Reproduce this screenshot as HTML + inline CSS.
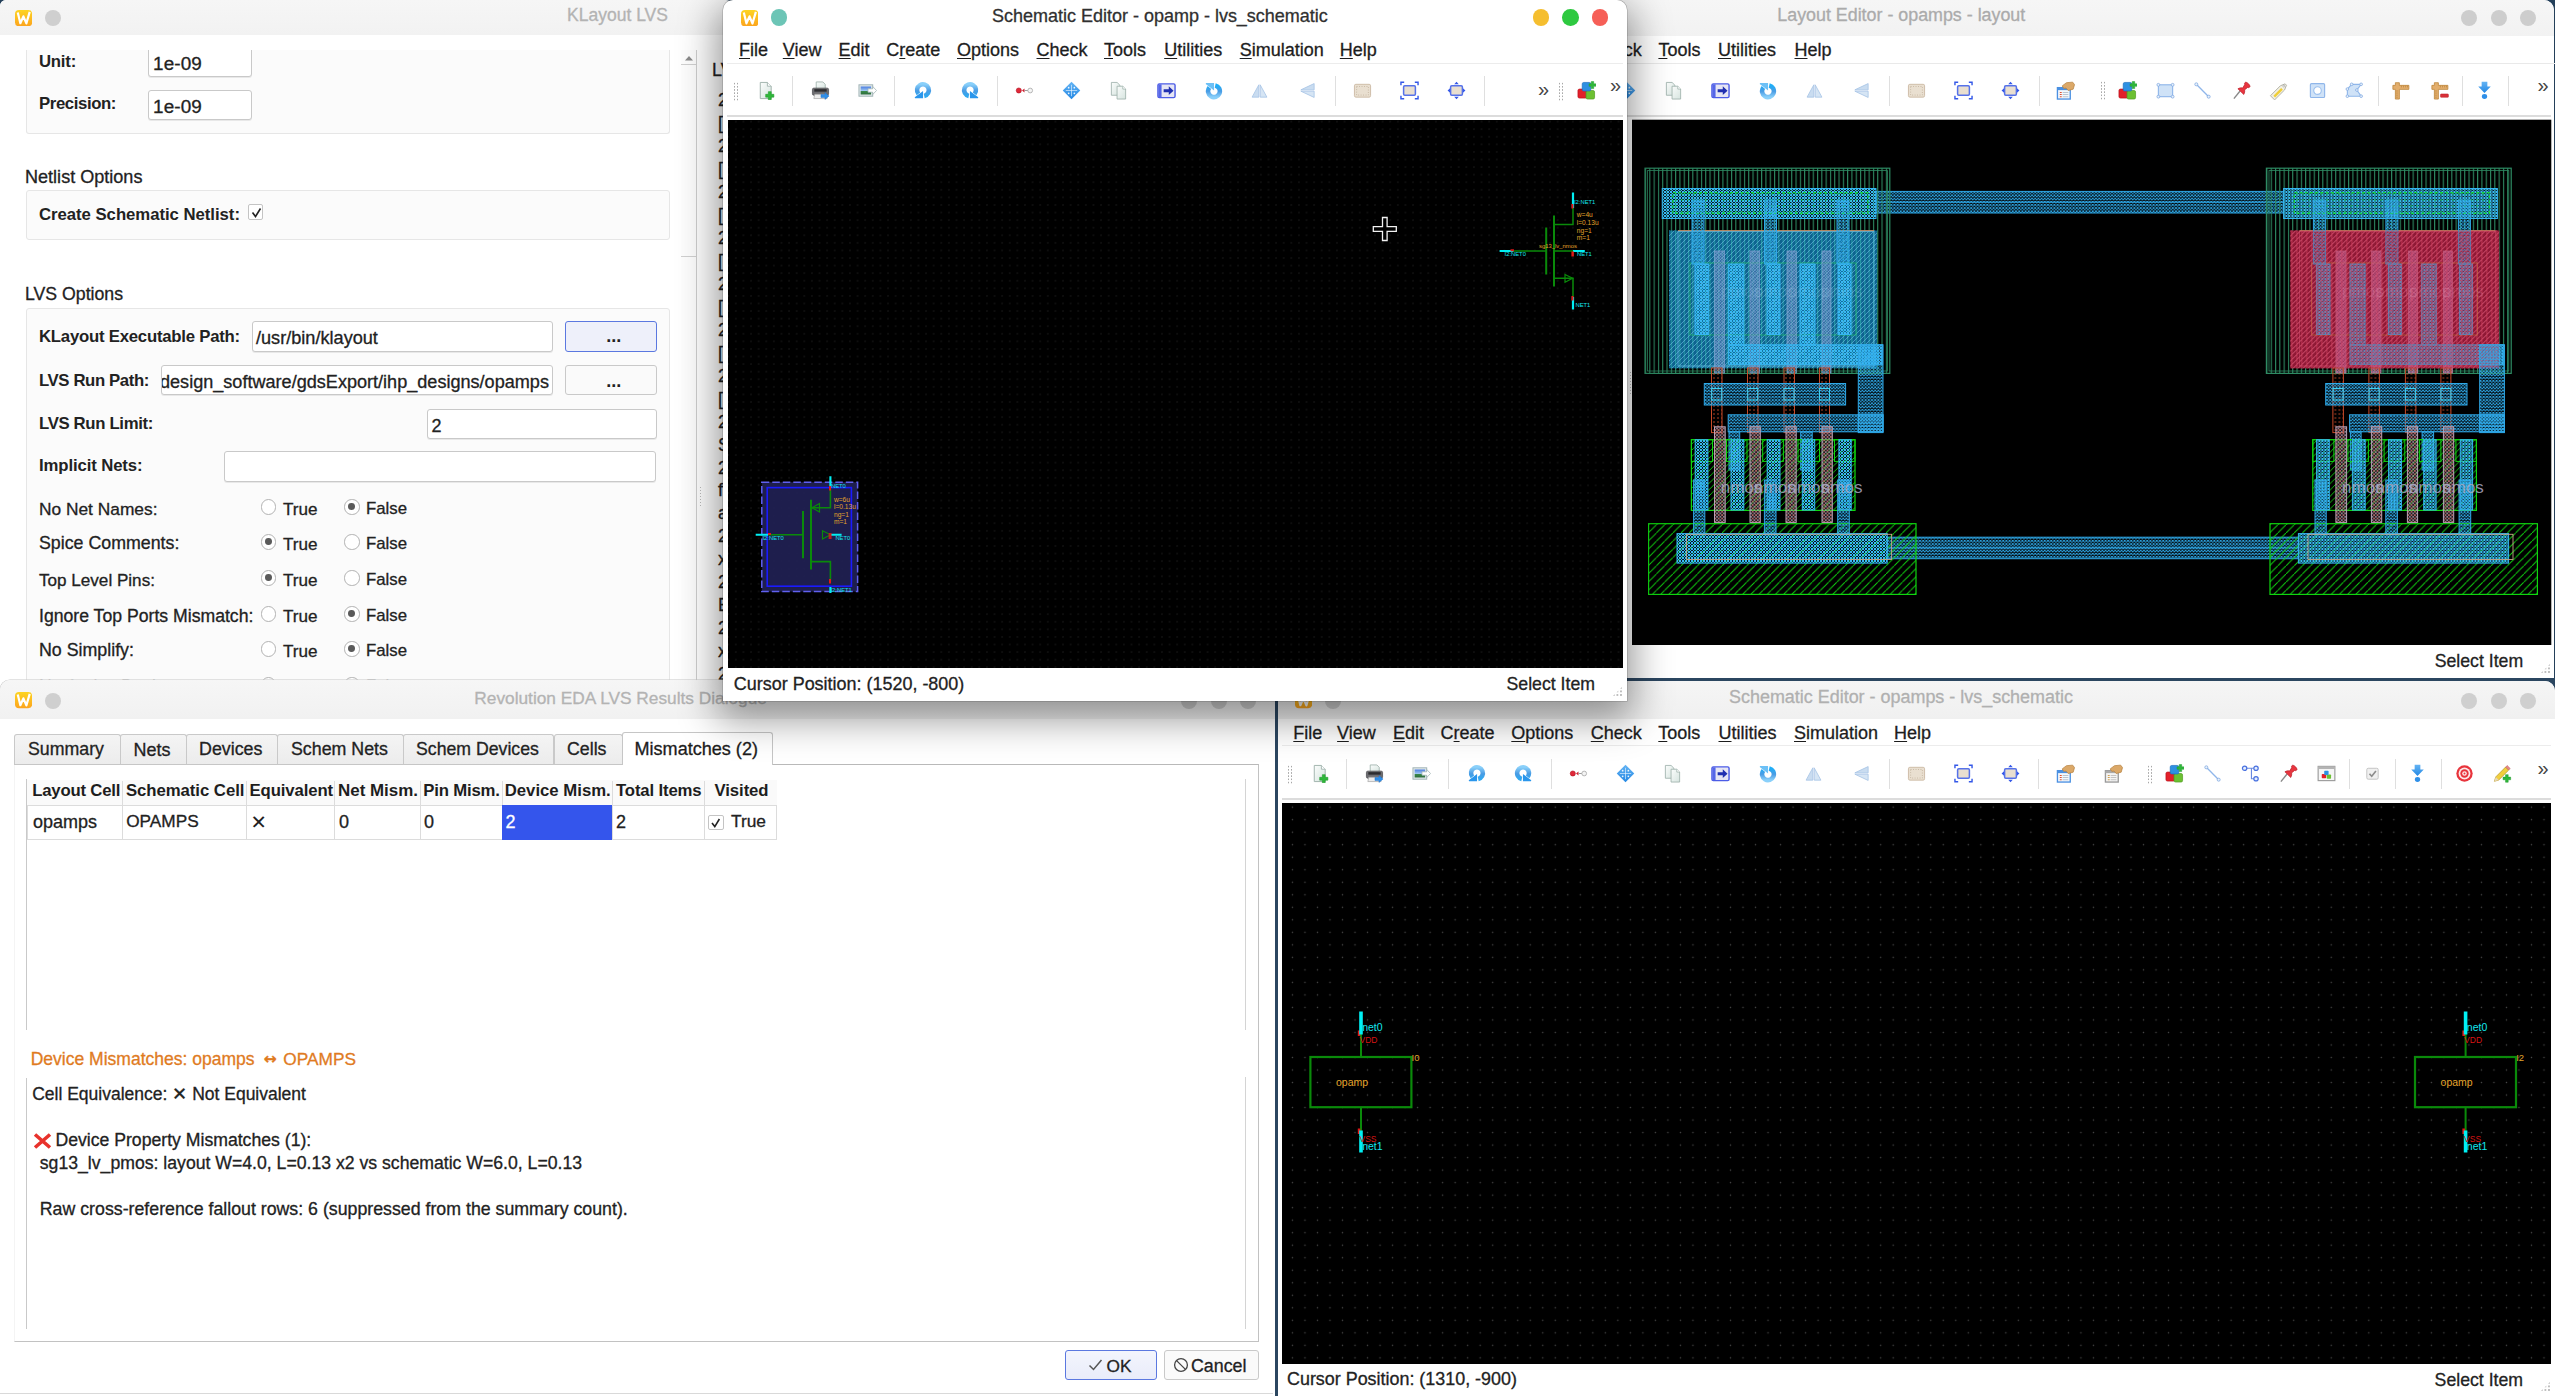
<!DOCTYPE html>
<html><head><meta charset="utf-8"><title>LVS</title><style>
html,body{margin:0;padding:0;}
body{width:2555px;height:1396px;overflow:hidden;position:relative;background:#24405a;font-family:"Liberation Sans",sans-serif;}
.b{position:absolute;box-sizing:border-box;}
.t{position:absolute;white-space:pre;line-height:1;}
.inp{background:#fff;border:1px solid #c9c9c9;border-radius:3px;box-shadow:0 1px 0 #e8e8e8;}
.btn{background:#fafafa;border:1px solid #c9c9c9;border-radius:3px;}
.grp{background:#fbfbfb;border:1px solid #e6e6e6;border-radius:3px;}
.chk{background:#fff;border:1px solid #c4c4c4;border-radius:2px;}
.rad{background:#fff;border:1.4px solid #b2b2b2;border-radius:50%;}
.r{-webkit-text-stroke:0.3px;}
.rad i{position:absolute;left:2.9px;top:2.9px;width:6.8px;height:6.8px;border-radius:50%;background:#5a5a5a;}
u{text-decoration-thickness:1px;text-underline-offset:2px;}
</style></head><body>
<!-- icons -->
<svg width="0" height="0" style="position:absolute"><defs>
<linearGradient id="gApp" x1="0" y1="0" x2="0" y2="1"><stop offset="0" stop-color="#fdd422"/><stop offset="1" stop-color="#fca41e"/></linearGradient>
<linearGradient id="gDoc" x1="0" y1="0" x2="1" y2="1"><stop offset="0" stop-color="#fbfdfc"/><stop offset="1" stop-color="#d6e4df"/></linearGradient>
<linearGradient id="gBlue" x1="0" y1="0" x2="0" y2="1"><stop offset="0" stop-color="#64b4f4"/><stop offset="1" stop-color="#2488e4"/></linearGradient>
<linearGradient id="gRing" x1="0" y1="0" x2="0" y2="1"><stop offset="0" stop-color="#8ad0fa"/><stop offset="0.55" stop-color="#4a9ce4"/><stop offset="1" stop-color="#30a8f0"/></linearGradient>
<linearGradient id="gRing2" x1="0" y1="0" x2="0" y2="1"><stop offset="0" stop-color="#8ad0fa"/><stop offset="0.5" stop-color="#4a9ce4"/><stop offset="1" stop-color="#1eaef8"/></linearGradient>
<linearGradient id="gLand" x1="0" y1="0" x2="0" y2="1"><stop offset="0" stop-color="#4a7ce0"/><stop offset="0.5" stop-color="#9cc4f0"/><stop offset="0.55" stop-color="#3c8c4c"/><stop offset="1" stop-color="#2c6c3c"/></linearGradient>
<g id="appicon"><rect x="0" y="0" width="18" height="17" rx="4.2" fill="url(#gApp)"/><path d="M2.9 2.6 L5.6 13.8 L8.8 6.6 L11.9 14 L15.4 1.9" fill="none" stroke="#fff" stroke-width="2.3" stroke-linejoin="round" stroke-linecap="butt"/></g>
<g id="i-new"><path d="M4.5 1.5h7.5l4 4v13h-11.5z" fill="url(#gDoc)" stroke="#9fb2ac" stroke-width="1"/><path d="M12 1.5v4h4" fill="#fff" stroke="#9fb2ac" stroke-width="0.9"/><path d="M13 11.2h3v2.8h2.8v3h-2.8v2.8h-3v-2.8h-2.8v-3h2.8z" fill="#2fb73a" stroke="#1f9a2c" stroke-width="0.6"/></g>
<g id="i-print"><path d="M5.5 1h7l2.5 2.5v5h-9.5z" fill="url(#gDoc)" stroke="#9fb2ac" stroke-width="0.9"/><rect x="1.5" y="7.5" width="17" height="7.5" rx="1.5" fill="#6c6c70" stroke="#4e4e52" stroke-width="0.8"/><rect x="3.5" y="8.6" width="13" height="2.6" fill="#2b2b2e"/><path d="M4 14h12l1 4.5h-14z" fill="#ececec" stroke="#aaa" stroke-width="0.8"/><path d="M10.5 14.3h4.2v-2.1l4.3 3.6-4.3 3.6v-2.1h-4.2z" fill="#2f8fe8" stroke="#1f6fc8" stroke-width="0.5"/></g>
<g id="i-export"><rect x="1" y="4" width="14.5" height="12" fill="#dfe8ea" stroke="#9fb2b4" stroke-width="1"/><rect x="2.8" y="5.8" width="11" height="8.4" fill="url(#gLand)"/><path d="M10.5 8.2h5v-2.4l4 4.2-4 4.2v-2.4h-5z" fill="#fff" stroke="#9fb2b4" stroke-width="0.8"/></g>
<g id="i-undo"><path d="M11.8 15.7A6.2 6.2 0 1 0 5.7 13.6" fill="none" stroke="url(#gRing)" stroke-width="4.8"/><path d="M1.8 17.2L10.6 10.4V18.2H2.2z" fill="#2a96ec"/></g>
<g id="i-redo"><g transform="translate(20,0) scale(-1,1)"><path d="M11.8 15.7A6.2 6.2 0 1 0 5.7 13.6" fill="none" stroke="url(#gRing)" stroke-width="4.8"/><path d="M1.8 17.2L10.6 10.4V18.2H2.2z" fill="#2a96ec"/></g></g>
<g id="i-stretch"><circle cx="4" cy="10" r="2.7" fill="#e02838" stroke="#b01020" stroke-width="0.6"/><path d="M10 7.8v4.4l-2.6-2.2z" fill="#d02030"/><path d="M10 10h4" stroke="#999" stroke-width="1"/><circle cx="16" cy="10" r="2.5" fill="#f4f4f4" stroke="#aaa" stroke-width="0.9"/></g>
<g id="i-move"><path d="M10 0.8l9.2 9.2-9.2 9.2-9.2-9.2z" fill="url(#gBlue)"/><path d="M10 4v12M4 10h12" stroke="#e8f4ff" stroke-width="0.8" stroke-opacity="0.85"/><g fill="#fff" fill-opacity="0.9"><circle cx="7" cy="7" r="0.9"/><circle cx="13" cy="7" r="0.9"/><circle cx="7" cy="13" r="0.9"/><circle cx="13" cy="13" r="0.9"/></g></g>
<g id="i-copy"><path d="M2.5 1.5h6l3 3v10.5h-9z" fill="url(#gDoc)" stroke="#9fb2ac" stroke-width="0.9"/><path d="M8.5 5.5h6l3 3v10.5h-9z" fill="url(#gDoc)" stroke="#9fb2ac" stroke-width="0.9"/><path d="M14.5 5.5v3h3" fill="#fff" stroke="#9fb2ac" stroke-width="0.8"/></g>
<g id="i-goto"><rect x="1" y="3" width="18" height="14.5" rx="1.5" fill="#e6e6f4" stroke="#4c5ce6" stroke-width="1.5"/><rect x="1.5" y="3.5" width="3.3" height="13.5" fill="#5566e8"/><path d="M7 8.6h5.4v-3l5 4.6-5 4.6v-3h-5.4z" fill="#2030b0"/></g>
<g id="i-rotate"><g transform="translate(0,20.4) scale(1,-1)"><path d="M11.8 15.7A6.2 6.2 0 1 0 5.7 13.6" fill="none" stroke="url(#gRing2)" stroke-width="4.8"/><path d="M1.8 17.2L10.6 10.4V18.2H2.2z" fill="#6cc0f6"/></g></g>
<g id="i-fliph"><path d="M9.3 4v13h-7.1z" fill="#c9dcf0" stroke="#a9c6e6" stroke-width="0.9"/><path d="M10.7 4v13h7.1z" fill="#d6e5f4" stroke="#a9c6e6" stroke-width="0.9"/></g>
<g id="i-flipv"><path d="M17 9.3h-14l14-6.6z" fill="#c9dcf0" stroke="#a9c6e6" stroke-width="0.9"/><path d="M17 10.7h-14l14 6.6z" fill="#d6e5f4" stroke="#a9c6e6" stroke-width="0.9"/></g>
<g id="i-fitrect"><rect x="1.5" y="3.5" width="17" height="13.5" rx="1.5" fill="#e9dfd0" stroke="#cdbca6" stroke-width="1"/><rect x="3.8" y="5.8" width="12.4" height="9" fill="none" stroke="#bfae98" stroke-width="0.8" stroke-dasharray="1 1.6"/></g>
<g id="i-zoomfit"><rect x="3.8" y="5" width="12.4" height="10" rx="1.2" fill="#e9dfd0" stroke="#5672ea" stroke-width="1.6"/><path d="M1 4.6v-3.2h3.4M19 4.6v-3.2h-3.4M1 15.4v3.2h3.4M19 15.4v3.2h-3.4" fill="none" stroke="#3458e8" stroke-width="1.5"/></g>
<g id="i-zoomsel"><rect x="3.8" y="5" width="12.4" height="10" rx="1.2" fill="#e9dfd0" stroke="#5672ea" stroke-width="1.6"/><path d="M10 0.8l2.4 2.6h-4.8zM10 19.2l2.4-2.6h-4.8zM0.6 10l2.6-2.4v4.8zM19.4 10l-2.6-2.4v4.8z" fill="#3458e8"/></g>
<g id="i-cubes"><rect x="1" y="8.5" width="9.5" height="9.5" rx="1.6" fill="#e3202a" stroke="#b80d18" stroke-width="0.7"/><rect x="9.5" y="10" width="9" height="9" rx="1.6" fill="#6cc032" stroke="#4d9a1c" stroke-width="0.7"/><rect x="5.5" y="1.5" width="9" height="9" rx="1.6" fill="#2d90e2" stroke="#1a6cc0" stroke-width="0.7"/><path d="M15 0.6h2.6v2.4h2.3v2.6h-2.3v2.4h-2.6v-2.4h-2.3v-2.6h2.3z" fill="#2fb73a" stroke="#1f9a2c" stroke-width="0.5"/></g>
<g id="i-props"><rect x="1.5" y="7" width="13.5" height="12" fill="#f4f8fc" stroke="#4a90e2" stroke-width="1.4"/><rect x="1.5" y="7" width="13.5" height="2.6" fill="#4a90e2"/><path d="M4 12h2M4 14.3h2M4 16.6h2" stroke="#e05030" stroke-width="1.1"/><path d="M7 12h6M7 14.3h6M7 16.6h6" stroke="#b8c4d0" stroke-width="1.1"/><path d="M6.5 5.2l4.5-3.4 6.5-.6 2 2.6-1.4 4.8-5.2 1.4-2.4-2.6-2.2.4z" fill="#dba868" stroke="#b98442" stroke-width="0.8"/></g>
<g id="i-props2"><rect x="1.5" y="7" width="13.5" height="12" fill="#f4f4f4" stroke="#9a9a9a" stroke-width="1.4"/><rect x="1.5" y="7" width="13.5" height="2.6" fill="#aaa"/><path d="M4 12h2M4 14.3h2M4 16.6h2" stroke="#d0a050" stroke-width="1.1"/><path d="M7 12h6M7 14.3h6M7 16.6h6" stroke="#c4c4c4" stroke-width="1.1"/><path d="M6.5 5.2l4.5-3.4 6.5-.6 2 2.6-1.4 4.8-5.2 1.4-2.4-2.6-2.2.4z" fill="#dba868" stroke="#b98442" stroke-width="0.8"/></g>
<g id="i-rect"><rect x="2.5" y="4" width="15" height="12.5" fill="#cfe2f7" stroke="#8fb6ea" stroke-width="1.2"/><g fill="#e8f1fb" stroke="#7fa8e0" stroke-width="0.8"><circle cx="2.5" cy="4" r="1.5"/><circle cx="17.5" cy="4" r="1.5"/><circle cx="2.5" cy="16.5" r="1.5"/><circle cx="17.5" cy="16.5" r="1.5"/></g></g>
<g id="i-line"><path d="M3.5 3.5l13 13" stroke="#8fb6ea" stroke-width="1.4"/><circle cx="3.5" cy="3.5" r="1.6" fill="#e8f1fb" stroke="#7fa8e0" stroke-width="0.8"/><circle cx="16.5" cy="16.5" r="1.6" fill="#e8f1fb" stroke="#7fa8e0" stroke-width="0.8"/></g>
<g id="i-pin"><path d="M2 18.5l6.5-8" stroke="#8a8a8a" stroke-width="1.5"/><path d="M6.2 8.2c2-1.2 4-1.2 5-.8l2.2-3.6c-.6-1 0-2.4 1.2-2.6 1.8.4 4 2.6 4.4 4.4-.2 1.2-1.6 1.8-2.6 1.2l-3.2 2.6c.4 1.2.2 3-.8 4.8z" fill="#e8353f" stroke="#b81822" stroke-width="0.7"/></g>
<g id="i-label"><path d="M1.5 15.5l10.5-10.5 5-2 1.4 1.4-2 5-10.5 10.5z" fill="#f2f0e4" stroke="#a8a89c" stroke-width="0.9"/><path d="M4.6 15.6l8.2-8.2 1.8 1.8-8.2 8.2z" fill="#f0cf3a"/><circle cx="15.6" cy="5.4" r="1" fill="#fff" stroke="#999" stroke-width="0.6"/></g>
<g id="i-via"><rect x="2.5" y="2.8" width="15" height="14.6" rx="1.2" fill="#cfe2f7" stroke="#8fb6ea" stroke-width="1.2"/><circle cx="10" cy="10.1" r="4" fill="#fff" stroke="#9cc0ee" stroke-width="1.2"/></g>
<g id="i-poly"><path d="M2.5 8.5l4.5-5h10l-4.5 6 4.5 6.5h-14.5z" fill="#cfe2f7" stroke="#8fb6ea" stroke-width="1.2"/><g fill="#e8f1fb" stroke="#7fa8e0" stroke-width="0.8"><circle cx="2.5" cy="8.5" r="1.4"/><circle cx="7" cy="3.5" r="1.4"/><circle cx="17" cy="3.5" r="1.4"/><circle cx="12.5" cy="9.5" r="1.4"/><circle cx="17" cy="16" r="1.4"/><circle cx="2.5" cy="16" r="1.4"/></g></g>
<g id="i-ruler"><path d="M4.6 1.8h4.2v2.8h10v4.2h-10v10.2h-4.2v-10.2h-2.6v-4.2h2.6z" fill="#e3ae6c" stroke="#c08840" stroke-width="0.9"/><path d="M11 5v1.8M13.2 5v1.8M15.4 5v1.8M17.4 5v1.8M5.4 10.5h1.8M5.4 12.7h1.8M5.4 14.9h1.8M5.4 17h1.8" stroke="#b07830" stroke-width="0.6"/></g>
<g id="i-rulerdel"><path d="M4.6 1.8h4.2v2.8h10v4.2h-10v10.2h-4.2v-10.2h-2.6v-4.2h2.6z" fill="#e3ae6c" stroke="#c08840" stroke-width="0.9"/><path d="M11 5v1.8M13.2 5v1.8M15.4 5v1.8M17.4 5v1.8M5.4 10.5h1.8M5.4 12.7h1.8M5.4 14.9h1.8M5.4 17h1.8" stroke="#b07830" stroke-width="0.6"/><rect x="11" y="13.6" width="8.4" height="3.6" rx="0.9" fill="#d83038" stroke="#b81820" stroke-width="0.5"/></g>
<g id="i-down"><path d="M7 0.8h6v5h3.6l-6.6 6.8-6.6-6.8h3.6z" fill="url(#gBlue)"/><ellipse cx="10" cy="16.3" rx="2.8" ry="2.6" fill="#2f8fe8"/></g>
<g id="i-nodes"><path d="M4.5 4.5h6.5v11h3M11 4.5h3" fill="none" stroke="#6a8ae0" stroke-width="1.2"/><g fill="#e6eefc" stroke="#4a72e0" stroke-width="1.3"><circle cx="3.8" cy="4.5" r="2.3"/><circle cx="15.8" cy="4.5" r="2.3"/><circle cx="15.8" cy="15.5" r="2.3"/></g></g>
<g id="i-wincubes"><rect x="1.2" y="2.5" width="17.6" height="15" fill="#f6f6f6" stroke="#9a9a9a" stroke-width="1.2"/><rect x="1.2" y="2.5" width="17.6" height="2.8" fill="#b4b4b4"/><rect x="5" y="10.5" width="4.6" height="4.6" rx="0.8" fill="#e3202a"/><rect x="10.2" y="11" width="4.6" height="4.6" rx="0.8" fill="#6cc032"/><rect x="7.6" y="7" width="4.6" height="4.6" rx="0.8" fill="#2d90e2"/></g>
<g id="i-check"><rect x="4" y="4.5" width="12" height="11.5" rx="1.5" fill="#f0f0f0" stroke="#c2c2c2" stroke-width="1"/><path d="M6.8 10.2l2.4 2.8 4.4-5.6" fill="none" stroke="#8c8c8c" stroke-width="1.7"/></g>
<g id="i-target"><circle cx="10" cy="10" r="8.6" fill="#e8343c"/><circle cx="10" cy="10" r="6.2" fill="#fdeaea"/><circle cx="10" cy="10" r="4.4" fill="#e8343c"/><circle cx="10" cy="10" r="2.4" fill="#fdeaea"/><circle cx="10" cy="10" r="1" fill="#e8343c"/></g>
<g id="i-pencilplus"><path d="M1.5 18.2l1.4-4.6 10.4-10.4 3.2 3.2-10.4 10.4z" fill="#f2cf3c" stroke="#b8982a" stroke-width="0.8"/><path d="M13.3 3.2l1.6-1.6 3.2 3.2-1.6 1.6z" fill="#e88a8a" stroke="#b85a5a" stroke-width="0.6"/><path d="M1.5 18.2l1.4-4.6 3.2 3.2z" fill="#e8d8b8"/><path d="M13.2 11.2h2.8v2.6h2.6v2.8h-2.6v2.6h-2.8v-2.6h-2.6v-2.8h2.6z" fill="#2fb73a" stroke="#1f9a2c" stroke-width="0.5"/></g>
</defs></svg>
<!-- win1 -->
<div class="b " style="left:0.0px;top:0.0px;width:735.0px;height:690.0px;background:#fff;border-radius:6px 10px 0 0;"></div>
<div class="b " style="left:0.0px;top:0.0px;width:735.0px;height:35.0px;background:linear-gradient(#f6f6f6,#f2f2f2);border-radius:6px 10px 0 0;"></div>
<svg class="b" style="left:15px;top:9.6px" width="17.2" height="16.3" viewBox="0 0 18 17"><use href="#appicon"/></svg>
<div class="b " style="left:44.9px;top:9.7px;width:16.4px;height:16.4px;border-radius:50%;background:#cfcfcf;"></div>
<span class="t r " style="left:567.0px;top:7.1px;font-size:17.52px;color:#b3b3b3;">KLayout LVS</span>
<div class="b " style="left:26.0px;top:50.0px;width:644.0px;height:84.0px;background:#fbfbfb;border:1px solid #e6e6e6;border-top:none;border-radius:0 0 3px 3px;box-sizing:border-box;"></div>
<span class="t " style="left:39.0px;top:54.0px;font-size:16.74px;letter-spacing:-0.223px;font-weight:bold;color:#222;">Unit:</span>
<div class="b inp" style="left:148.0px;top:47.0px;width:103.5px;height:30.3px;"><span class="t r " style="left:4.0px;top:7.2px;font-size:18.90px;letter-spacing:0.132px;color:#222;">1e-09</span></div>
<div class="b " style="left:140.0px;top:35.5px;width:120.0px;height:14.5px;background:#fff;"></div>
<span class="t " style="left:39.0px;top:96.3px;font-size:16.74px;letter-spacing:-0.394px;font-weight:bold;color:#222;">Precision:</span>
<div class="b inp" style="left:148.0px;top:90.3px;width:103.5px;height:30.0px;"><span class="t r " style="left:4.0px;top:6.5px;font-size:18.90px;letter-spacing:0.132px;color:#222;">1e-09</span></div>
<span class="t r " style="left:25.0px;top:167.5px;font-size:18.07px;color:#222;">Netlist Options</span>
<div class="b grp" style="left:26.0px;top:190.0px;width:644.0px;height:50.0px;"></div>
<span class="t " style="left:39.0px;top:206.9px;font-size:16.74px;letter-spacing:-0.036px;font-weight:bold;color:#222;">Create Schematic Netlist:</span>
<div class="b chk" style="left:247.5px;top:204.0px;width:15.5px;height:15.5px;"><svg width="16" height="16" viewBox="0 0 16 16" style="position:absolute;left:0;top:0"><path d="M3.5 7.5 L6.5 11.5 L11.5 3.5" fill="none" stroke="#222" stroke-width="1.6"/></svg></div>
<span class="t r " style="left:25.0px;top:286.1px;font-size:17.69px;color:#222;">LVS Options</span>
<div class="b grp" style="left:26.0px;top:307.5px;width:644.0px;height:390.0px;"></div>
<span class="t " style="left:39.0px;top:329.3px;font-size:16.74px;letter-spacing:-0.230px;font-weight:bold;color:#222;">KLayout Executable Path:</span>
<div class="b inp" style="left:252.0px;top:321.0px;width:301.0px;height:30.5px;"><span class="t r " style="left:3.0px;top:6.7px;font-size:18.14px;color:#222;">/usr/bin/klayout</span></div>
<div class="b btn" style="left:565.3px;top:321.0px;width:92.0px;height:30.5px;border-color:#5b78e0;background:#eef0fa;"><span class="t " style="left:40.0px;top:5.3px;font-size:18.00px;font-weight:bold;color:#222;">...</span></div>
<span class="t " style="left:39.0px;top:372.8px;font-size:16.74px;letter-spacing:-0.385px;font-weight:bold;color:#222;">LVS Run Path:</span>
<div class="b inp" style="left:161.0px;top:365.3px;width:392.0px;height:30.0px;overflow:hidden;"><span class="t r " style="left:-2.0px;top:6.8px;font-size:18.08px;color:#222;">design_software/gdsExport/ihp_designs/opamps</span></div>
<div class="b btn" style="left:565.3px;top:365.3px;width:92.0px;height:30.0px;"><span class="t " style="left:40.0px;top:5.3px;font-size:18.00px;font-weight:bold;color:#222;">...</span></div>
<span class="t " style="left:39.0px;top:415.8px;font-size:16.74px;letter-spacing:-0.337px;font-weight:bold;color:#222;">LVS Run Limit:</span>
<div class="b inp" style="left:426.6px;top:409.0px;width:230.0px;height:30.0px;"><span class="t r " style="left:4.0px;top:6.9px;font-size:18.00px;color:#222;">2</span></div>
<span class="t " style="left:39.0px;top:458.3px;font-size:16.74px;letter-spacing:-0.115px;font-weight:bold;color:#222;">Implicit Nets:</span>
<div class="b inp" style="left:224.4px;top:451.0px;width:432.0px;height:30.5px;"></div>
<span class="t r " style="left:39.0px;top:500.8px;font-size:17.34px;color:#222;">No Net Names:</span>
<div class="b rad" style="left:261.1px;top:499.3px;width:15.4px;height:15.4px;"></div>
<span class="t r " style="left:283.0px;top:501.0px;font-size:17.09px;color:#222;">True</span>
<div class="b rad" style="left:344.3px;top:499.3px;width:15.4px;height:15.4px;"><i></i></div>
<span class="t r " style="left:366.0px;top:501.3px;font-size:16.77px;color:#222;">False</span>
<span class="t r " style="left:39.0px;top:535.4px;font-size:17.80px;color:#222;">Spice Comments:</span>
<div class="b rad" style="left:261.1px;top:534.3px;width:15.4px;height:15.4px;"><i></i></div>
<span class="t r " style="left:283.0px;top:536.0px;font-size:17.09px;color:#222;">True</span>
<div class="b rad" style="left:344.3px;top:534.3px;width:15.4px;height:15.4px;"></div>
<span class="t r " style="left:366.0px;top:536.3px;font-size:16.77px;color:#222;">False</span>
<span class="t r " style="left:39.0px;top:572.0px;font-size:17.10px;color:#222;">Top Level Pins:</span>
<div class="b rad" style="left:261.1px;top:570.3px;width:15.4px;height:15.4px;"><i></i></div>
<span class="t r " style="left:283.0px;top:572.0px;font-size:17.09px;color:#222;">True</span>
<div class="b rad" style="left:344.3px;top:570.3px;width:15.4px;height:15.4px;"></div>
<span class="t r " style="left:366.0px;top:572.3px;font-size:16.77px;color:#222;">False</span>
<span class="t r " style="left:39.0px;top:607.6px;font-size:17.65px;color:#222;">Ignore Top Ports Mismatch:</span>
<div class="b rad" style="left:261.1px;top:606.3px;width:15.4px;height:15.4px;"></div>
<span class="t r " style="left:283.0px;top:608.0px;font-size:17.09px;color:#222;">True</span>
<div class="b rad" style="left:344.3px;top:606.3px;width:15.4px;height:15.4px;"><i></i></div>
<span class="t r " style="left:366.0px;top:608.3px;font-size:16.77px;color:#222;">False</span>
<span class="t r " style="left:39.0px;top:642.4px;font-size:17.81px;color:#222;">No Simplify:</span>
<div class="b rad" style="left:261.1px;top:641.3px;width:15.4px;height:15.4px;"></div>
<span class="t r " style="left:283.0px;top:643.0px;font-size:17.09px;color:#222;">True</span>
<div class="b rad" style="left:344.3px;top:641.3px;width:15.4px;height:15.4px;"><i></i></div>
<span class="t r " style="left:366.0px;top:643.3px;font-size:16.77px;color:#222;">False</span>
<span class="t r " style="left:39.0px;top:678.6px;font-size:17.56px;color:#222;">No Series Resistors:</span>
<div class="b rad" style="left:261.1px;top:677.3px;width:15.4px;height:15.4px;"></div>
<span class="t r " style="left:283.0px;top:679.0px;font-size:17.09px;color:#222;">True</span>
<div class="b rad" style="left:344.3px;top:677.3px;width:15.4px;height:15.4px;"><i></i></div>
<span class="t r " style="left:366.0px;top:679.3px;font-size:16.77px;color:#222;">False</span>
<div class="b " style="left:681.0px;top:50.0px;width:15.8px;height:640.0px;background:#fdfdfd;border-right:1px solid #cfcfcf;box-sizing:border-box;"></div>
<svg class="b" style="left:684px;top:54px" width="10" height="8"><path d="M1 6.5 L5 2 L9 6.5Z" fill="#8a8a8a"/></svg>
<div class="b " style="left:681.0px;top:64.0px;width:15.0px;height:1.0px;background:#d0d0d0;"></div>
<div class="b " style="left:681.0px;top:256.0px;width:15.0px;height:1.0px;background:#d0d0d0;"></div>
<div class="b " style="left:699.5px;top:487.0px;width:1.0px;height:20.0px;background:repeating-linear-gradient(#bbb 0 1px,transparent 1px 3px);"></div>
<span class="t r " style="left:712.0px;top:61.0px;font-size:18.00px;color:#222;">LVS</span>
<span class="t r " style="left:718.0px;top:91.3px;font-size:18.00px;color:#222;">2</span>
<span class="t r " style="left:718.0px;top:114.2px;font-size:18.00px;color:#222;">[</span>
<span class="t r " style="left:718.0px;top:137.2px;font-size:18.00px;color:#222;">2</span>
<span class="t r " style="left:718.0px;top:160.1px;font-size:18.00px;color:#222;">[</span>
<span class="t r " style="left:718.0px;top:183.1px;font-size:18.00px;color:#222;">2</span>
<span class="t r " style="left:718.0px;top:206.0px;font-size:18.00px;color:#222;">[</span>
<span class="t r " style="left:718.0px;top:229.0px;font-size:18.00px;color:#222;">2</span>
<span class="t r " style="left:718.0px;top:251.9px;font-size:18.00px;color:#222;">[</span>
<span class="t r " style="left:718.0px;top:274.9px;font-size:18.00px;color:#222;">2</span>
<span class="t r " style="left:718.0px;top:297.8px;font-size:18.00px;color:#222;">[</span>
<span class="t r " style="left:718.0px;top:320.8px;font-size:18.00px;color:#222;">2</span>
<span class="t r " style="left:718.0px;top:343.7px;font-size:18.00px;color:#222;">[</span>
<span class="t r " style="left:718.0px;top:366.7px;font-size:18.00px;color:#222;">2</span>
<span class="t r " style="left:718.0px;top:389.6px;font-size:18.00px;color:#222;">[</span>
<span class="t r " style="left:718.0px;top:412.6px;font-size:18.00px;color:#222;">2</span>
<span class="t r " style="left:718.0px;top:435.5px;font-size:18.00px;color:#222;">S</span>
<span class="t r " style="left:718.0px;top:458.5px;font-size:18.00px;color:#222;">2</span>
<span class="t r " style="left:718.0px;top:481.4px;font-size:18.00px;color:#222;">f</span>
<span class="t r " style="left:718.0px;top:504.4px;font-size:18.00px;color:#222;">a</span>
<span class="t r " style="left:718.0px;top:527.3px;font-size:18.00px;color:#222;">2</span>
<span class="t r " style="left:718.0px;top:550.3px;font-size:18.00px;color:#222;">x</span>
<span class="t r " style="left:718.0px;top:573.2px;font-size:18.00px;color:#222;">2</span>
<span class="t r " style="left:718.0px;top:596.2px;font-size:18.00px;color:#222;">E</span>
<span class="t r " style="left:718.0px;top:619.1px;font-size:18.00px;color:#222;">2</span>
<span class="t r " style="left:718.0px;top:642.1px;font-size:18.00px;color:#222;">x</span>
<span class="t r " style="left:718.0px;top:665.0px;font-size:18.00px;color:#222;">2</span>
<!-- win3 -->
<div class="b " style="left:1540.0px;top:0.0px;width:1014.3px;height:679.0px;background:#fff;border-radius:10px 10px 0 0;"></div>
<div class="b " style="left:1540.0px;top:0.0px;width:1014.3px;height:35.5px;background:linear-gradient(#f6f6f6,#f2f2f2);border-radius:10px 10px 0 0;"></div>
<span class="t r " style="left:1777.3px;top:6.6px;font-size:17.85px;color:#ababab;">Layout Editor - opamps - layout</span>
<div class="b " style="left:2461.0px;top:9.5px;width:16.0px;height:16.0px;border-radius:50%;background:#cdcdcd;"></div>
<div class="b " style="left:2491.0px;top:9.5px;width:16.0px;height:16.0px;border-radius:50%;background:#cdcdcd;"></div>
<div class="b " style="left:2520.0px;top:9.5px;width:16.0px;height:16.0px;border-radius:50%;background:#cdcdcd;"></div>
<span class="t r " style="left:1590.8px;top:40.9px;font-size:18.00px;color:#1d1d1d;"><u>C</u>heck</span>
<span class="t r " style="left:1658.4px;top:40.9px;font-size:18.00px;color:#1d1d1d;"><u>T</u>ools</span>
<span class="t r " style="left:1718.0px;top:40.9px;font-size:18.00px;color:#1d1d1d;"><u>U</u>tilities</span>
<span class="t r " style="left:1794.5px;top:40.9px;font-size:18.00px;color:#1d1d1d;"><u>H</u>elp</span>
<div class="b " style="left:1540.0px;top:62.5px;width:1015.0px;height:1.5px;background:#e9e9e9;"></div>
<div class="b " style="left:1540.0px;top:115.2px;width:1011.0px;height:1.8px;background:#dcdcdc;"></div>
<svg class="b" style="left:1616.5px;top:80.9px" width="19" height="19" viewBox="0 0 20 20"><use href="#i-move"/></svg>
<svg class="b" style="left:1663.5px;top:80.9px" width="19" height="19" viewBox="0 0 20 20"><use href="#i-copy"/></svg>
<svg class="b" style="left:1710.5px;top:80.9px" width="19" height="19" viewBox="0 0 20 20"><use href="#i-goto"/></svg>
<svg class="b" style="left:1758.0px;top:80.9px" width="19" height="19" viewBox="0 0 20 20"><use href="#i-rotate"/></svg>
<svg class="b" style="left:1804.5px;top:80.9px" width="19" height="19" viewBox="0 0 20 20"><use href="#i-fliph"/></svg>
<svg class="b" style="left:1852.0px;top:80.9px" width="19" height="19" viewBox="0 0 20 20"><use href="#i-flipv"/></svg>
<div class="b" style="left:1889.2px;top:76.1px;width:1px;height:30px;background:#dfdfdf"></div>
<svg class="b" style="left:1906.9px;top:80.9px" width="19" height="19" viewBox="0 0 20 20"><use href="#i-fitrect"/></svg>
<svg class="b" style="left:1953.5px;top:80.9px" width="19" height="19" viewBox="0 0 20 20"><use href="#i-zoomfit"/></svg>
<svg class="b" style="left:2000.9px;top:80.9px" width="19" height="19" viewBox="0 0 20 20"><use href="#i-zoomsel"/></svg>
<div class="b" style="left:2038.5px;top:76.1px;width:1px;height:30px;background:#dfdfdf"></div>
<svg class="b" style="left:2056.2px;top:80.9px" width="19" height="19" viewBox="0 0 20 20"><use href="#i-props"/></svg>
<div class="b" style="left:2099.5px;top:81.4px;width:6px;height:19px;background:radial-gradient(circle,#a8a8a8 0.6px,transparent 0.9px) 0 0/3px 3.2px"></div>
<svg class="b" style="left:2118.0px;top:80.9px" width="19" height="19" viewBox="0 0 20 20"><use href="#i-cubes"/></svg>
<svg class="b" style="left:2155.5px;top:80.9px" width="19" height="19" viewBox="0 0 20 20"><use href="#i-rect"/></svg>
<svg class="b" style="left:2193.0px;top:80.9px" width="19" height="19" viewBox="0 0 20 20"><use href="#i-line"/></svg>
<svg class="b" style="left:2231.5px;top:80.9px" width="19" height="19" viewBox="0 0 20 20"><use href="#i-pin"/></svg>
<svg class="b" style="left:2269.1px;top:80.9px" width="19" height="19" viewBox="0 0 20 20"><use href="#i-label"/></svg>
<svg class="b" style="left:2307.5px;top:80.9px" width="19" height="19" viewBox="0 0 20 20"><use href="#i-via"/></svg>
<svg class="b" style="left:2345.2px;top:80.9px" width="19" height="19" viewBox="0 0 20 20"><use href="#i-poly"/></svg>
<div class="b" style="left:2378.0px;top:76.1px;width:1px;height:30px;background:#dfdfdf"></div>
<svg class="b" style="left:2391.0px;top:80.9px" width="19" height="19" viewBox="0 0 20 20"><use href="#i-ruler"/></svg>
<svg class="b" style="left:2429.5px;top:80.9px" width="19" height="19" viewBox="0 0 20 20"><use href="#i-rulerdel"/></svg>
<div class="b" style="left:2461.5px;top:76.1px;width:1px;height:30px;background:#dfdfdf"></div>
<svg class="b" style="left:2475.1px;top:80.9px" width="19" height="19" viewBox="0 0 20 20"><use href="#i-down"/></svg>
<div class="b" style="left:2507.9px;top:76.1px;width:1px;height:30px;background:#dfdfdf"></div>
<span class="t r " style="left:2537.5px;top:75.1px;font-size:20.00px;color:#444;-webkit-text-stroke:0;">»</span>
<svg class="b" style="left:0;top:0" width="2555" height="700" viewBox="0 0 2555 700">
<defs>
<pattern id="pNW" width="4.3" height="8" patternUnits="userSpaceOnUse" x="1645"><rect x="0" width="1.1" height="8" fill="#2e8b63"/></pattern>
<pattern id="pNW2" width="4.3" height="8" patternUnits="userSpaceOnUse" x="1645"><rect x="0" width="1.1" height="8" fill="#2aa4a8" fill-opacity="0.8"/></pattern>
<pattern id="pM1" width="3.2" height="3.2" patternUnits="userSpaceOnUse"><path d="M-1 -1 L4.2 4.2 M-1 4.2 L4.2 -1" stroke="#2fa9e8" stroke-width="0.85" fill="none"/></pattern>
<pattern id="pM1b" width="3" height="3" patternUnits="userSpaceOnUse"><rect width="3" height="3" fill="#27aeea" fill-opacity="0.14"/><path d="M-1 -1 L4 4 M-1 4 L4 -1" stroke="#38b8f4" stroke-width="1" fill="none"/></pattern>
<pattern id="pHb" width="5" height="5" patternUnits="userSpaceOnUse"><path d="M-1 6 L6 -1" stroke="#6fc0e6" stroke-width="0.8" stroke-opacity="0.75"/></pattern>
<pattern id="pHr" width="5" height="5" patternUnits="userSpaceOnUse"><path d="M-1 6 L6 -1" stroke="#e0607e" stroke-width="0.8" stroke-opacity="0.7"/><rect x="0" width="0.9" height="5" fill="#d24060" fill-opacity="0.5"/></pattern>
<pattern id="pG" width="6.3" height="6.3" patternUnits="userSpaceOnUse"><path d="M-1 7.3 L7.3 -1" stroke="#0fd60f" stroke-width="0.9"/></pattern>
<pattern id="pTap" width="8.2" height="8.2" patternUnits="userSpaceOnUse"><path d="M-1 9.2 L9.2 -1" stroke="#0fd60f" stroke-width="0.95"/></pattern>
<pattern id="pGdot" width="6" height="6" patternUnits="userSpaceOnUse"><circle cx="2" cy="2" r="0.8" fill="#12d83a"/></pattern>
<pattern id="pPolyB" width="3" height="3" patternUnits="userSpaceOnUse"><rect width="3" height="3" fill="#6f8cc4" fill-opacity="0.4"/><path d="M-1 -1 L4 4 M-1 4 L4 -1" stroke="#86a0d4" stroke-width="0.5" stroke-opacity="0.8"/></pattern>
<pattern id="pPolyR" width="3" height="3" patternUnits="userSpaceOnUse"><rect width="3" height="3" fill="#b870b0" fill-opacity="0.45"/><path d="M-1 -1 L4 4 M-1 4 L4 -1" stroke="#d080b0" stroke-width="0.6"/></pattern>
<pattern id="pPolyO" width="4" height="4" patternUnits="userSpaceOnUse"><circle cx="2" cy="2" r="0.8" fill="#c84a28"/></pattern>
<pattern id="pPolyN" width="3.4" height="3.4" patternUnits="userSpaceOnUse"><rect width="3.4" height="3.4" fill="#9a8494" fill-opacity="0.22"/><path d="M-1 -1 L4.4 4.4 M-1 4.4 L4.4 -1" stroke="#b9a3b8" stroke-width="0.6"/><circle cx="1.7" cy="1.7" r="0.7" fill="#d04030"/></pattern>
</defs>
<rect x="1632.0" y="119.7" width="919.3" height="525.3" fill="#000"/>
<rect x="1876.0" y="191.4" width="407.6" height="21.6" fill="url(#pM1)" stroke="#2fa9e8" stroke-width="1"/>
<rect x="1876.0" y="201.6" width="407.6" height="1.0" fill="#2fa9e8"/>
<rect x="1887.2" y="537.2" width="411.2" height="21.5" fill="url(#pM1)" stroke="#2fa9e8" stroke-width="1"/>
<rect x="1887.2" y="547.4" width="411.2" height="1.0" fill="#2fa9e8"/>
<g transform="translate(0.0,0)">
<rect x="1645.0" y="168.2" width="244.8" height="205.2" fill="url(#pNW)" stroke="#2e8b63" stroke-width="1.2"/>
<rect x="1647.6" y="170.6" width="239.8" height="200.4" fill="none" stroke="#2e8b63" stroke-width="0.8"/>
<rect x="1669.0" y="230.5" width="208.0" height="137.8" fill="#0f6898" fill-opacity="0.95"/>
<rect x="1669.0" y="230.5" width="208.0" height="137.8" fill="url(#pNW2)"/>
<rect x="1669.0" y="230.5" width="208.0" height="137.8" fill="url(#pHb)"/>
<rect x="1678.0" y="231.5" width="196.0" height="134.5" fill="none" stroke="#5fb6dc" stroke-width="0.8"/>
<line x1="1678" y1="230.6" x2="1874" y2="230.6" stroke="#c08a60" stroke-width="1"/>
<rect x="1690.0" y="263.0" width="166.0" height="72.0" fill="none" stroke="#20c060" stroke-width="0.8" stroke-opacity="0.8"/>
<rect x="1714.6" y="251.0" width="10.0" height="122.0" fill="url(#pPolyB)" stroke="#7f9fd0" stroke-width="0.7"/>
<rect x="1750.0" y="251.0" width="9.6" height="122.0" fill="url(#pPolyB)" stroke="#7f9fd0" stroke-width="0.7"/>
<rect x="1787.0" y="251.0" width="9.3" height="122.0" fill="url(#pPolyB)" stroke="#7f9fd0" stroke-width="0.7"/>
<rect x="1822.0" y="251.0" width="9.0" height="122.0" fill="url(#pPolyB)" stroke="#7f9fd0" stroke-width="0.7"/>
<rect x="1711.5" y="368.0" width="10.5" height="64.6" fill="url(#pPolyO)" stroke="#c84a28" stroke-width="1"/>
<rect x="1747.5" y="368.0" width="10.5" height="64.6" fill="url(#pPolyO)" stroke="#c84a28" stroke-width="1"/>
<rect x="1784.0" y="368.0" width="10.5" height="64.6" fill="url(#pPolyO)" stroke="#c84a28" stroke-width="1"/>
<rect x="1819.5" y="368.0" width="10.0" height="64.6" fill="url(#pPolyO)" stroke="#c84a28" stroke-width="1"/>
<rect x="1662.2" y="188.5" width="213.8" height="30.0" fill="url(#pM1b)" stroke="#35b4f0" stroke-width="1"/>
<rect x="1673.0" y="192.6" width="195.0" height="20.8" fill="url(#pGdot)" stroke="#12d83a" stroke-width="1.3" stroke-dasharray="3 2.2"/>
<rect x="1692.0" y="200.0" width="12.0" height="64.0" fill="url(#pM1)" stroke="#2fa9e8" stroke-width="1"/>
<rect x="1764.5" y="200.0" width="12.0" height="64.0" fill="url(#pM1)" stroke="#2fa9e8" stroke-width="1"/>
<rect x="1837.0" y="200.0" width="12.0" height="64.0" fill="url(#pM1)" stroke="#2fa9e8" stroke-width="1"/>
<rect x="1695.0" y="264.0" width="13.6" height="70.5" fill="url(#pM1b)" stroke="#35b4f0" stroke-width="1"/>
<rect x="1728.6" y="264.0" width="15.1" height="81.0" fill="url(#pM1b)" stroke="#35b4f0" stroke-width="1"/>
<rect x="1767.0" y="264.0" width="13.0" height="70.5" fill="url(#pM1b)" stroke="#35b4f0" stroke-width="1"/>
<rect x="1800.0" y="264.0" width="15.0" height="81.0" fill="url(#pM1b)" stroke="#35b4f0" stroke-width="1"/>
<rect x="1838.0" y="264.0" width="13.0" height="70.5" fill="url(#pM1b)" stroke="#35b4f0" stroke-width="1"/>
<rect x="1728.6" y="344.8" width="154.0" height="19.6" fill="url(#pM1b)" stroke="#35b4f0" stroke-width="1"/>
<rect x="1858.3" y="344.8" width="24.7" height="87.8" fill="url(#pM1)" stroke="#2fa9e8" stroke-width="1"/>
<rect x="1858.3" y="414.8" width="24.7" height="17.0" fill="url(#pM1)" stroke="#2fa9e8" stroke-width="1"/>
<rect x="1704.3" y="383.5" width="141.3" height="21.5" fill="url(#pM1)" stroke="#2fa9e8" stroke-width="1"/>
<rect x="1711.7" y="388.5" width="10.0" height="11.5" fill="none" stroke="#3fd0f0" stroke-width="1"/>
<rect x="1747.7" y="388.5" width="10.0" height="11.5" fill="none" stroke="#3fd0f0" stroke-width="1"/>
<rect x="1784.0" y="388.5" width="10.0" height="11.5" fill="none" stroke="#3fd0f0" stroke-width="1"/>
<rect x="1819.5" y="388.5" width="10.0" height="11.5" fill="none" stroke="#3fd0f0" stroke-width="1"/>
<rect x="1728.2" y="414.8" width="154.8" height="17.0" fill="url(#pM1)" stroke="#2fa9e8" stroke-width="1"/>
<rect x="1729.0" y="431.8" width="10.7" height="38.2" fill="url(#pM1)" stroke="#2fa9e8" stroke-width="1"/>
<rect x="1800.7" y="431.8" width="11.5" height="38.2" fill="url(#pM1)" stroke="#2fa9e8" stroke-width="1"/>
<rect x="1691.4" y="439.7" width="163.6" height="70.7" fill="url(#pG)" stroke="#0fd60f" stroke-width="1.2"/>
<rect x="1691.4" y="439.7" width="21.1" height="21.7" fill="none" stroke="#0fd60f" stroke-width="1"/>
<rect x="1726.5" y="439.7" width="20.5" height="21.7" fill="none" stroke="#0fd60f" stroke-width="1"/>
<rect x="1762.7" y="439.7" width="20.7" height="21.7" fill="none" stroke="#0fd60f" stroke-width="1"/>
<rect x="1798.0" y="439.7" width="21.5" height="21.7" fill="none" stroke="#0fd60f" stroke-width="1"/>
<rect x="1834.5" y="439.7" width="20.5" height="21.7" fill="none" stroke="#0fd60f" stroke-width="1"/>
<rect x="1714.5" y="426.8" width="10.7" height="95.6" fill="url(#pPolyN)" stroke="#b9a3b8" stroke-width="1"/>
<rect x="1750.0" y="426.8" width="10.3" height="95.6" fill="url(#pPolyN)" stroke="#b9a3b8" stroke-width="1"/>
<rect x="1786.0" y="426.8" width="10.2" height="95.6" fill="url(#pPolyN)" stroke="#b9a3b8" stroke-width="1"/>
<rect x="1822.0" y="426.8" width="10.3" height="95.6" fill="url(#pPolyN)" stroke="#b9a3b8" stroke-width="1"/>
<rect x="1695.2" y="439.7" width="12.7" height="70.3" fill="url(#pM1b)" stroke="#35b4f0" stroke-width="1"/>
<rect x="1731.0" y="439.7" width="12.8" height="70.3" fill="url(#pM1b)" stroke="#35b4f0" stroke-width="1"/>
<rect x="1767.2" y="439.7" width="12.8" height="70.3" fill="url(#pM1b)" stroke="#35b4f0" stroke-width="1"/>
<rect x="1802.3" y="439.7" width="12.4" height="70.3" fill="url(#pM1b)" stroke="#35b4f0" stroke-width="1"/>
<rect x="1838.9" y="439.7" width="12.3" height="70.3" fill="url(#pM1b)" stroke="#35b4f0" stroke-width="1"/>
<rect x="1648.6" y="523.7" width="267.4" height="70.7" fill="url(#pTap)" stroke="#0fd60f" stroke-width="1.2"/>
<rect x="1693.6" y="480.0" width="11.2" height="54.8" fill="url(#pM1)" stroke="#2fa9e8" stroke-width="1"/>
<rect x="1764.4" y="480.0" width="11.6" height="54.8" fill="url(#pM1)" stroke="#2fa9e8" stroke-width="1"/>
<rect x="1837.7" y="480.0" width="11.6" height="54.8" fill="url(#pM1)" stroke="#2fa9e8" stroke-width="1"/>
<rect x="1677.0" y="533.6" width="210.2" height="29.5" fill="url(#pM1b)" stroke="#35b4f0" stroke-width="1"/>
<rect x="1686.6" y="534.3" width="205.0" height="25.2" fill="none" stroke="#c8a58a" stroke-width="0.9"/>
<text x="1720.7" y="492.8" font-size="17" fill="#a9a8c2" fill-opacity="0.85" font-family="Liberation Sans, sans-serif">nmos</text>
<text x="1720.7" y="297" font-size="17" fill="#9cc8e8" fill-opacity="0.2" font-family="Liberation Sans, sans-serif">pmos</text>
<text x="1754.1" y="492.8" font-size="17" fill="#a9a8c2" fill-opacity="0.85" font-family="Liberation Sans, sans-serif">nmos</text>
<text x="1754.1" y="297" font-size="17" fill="#9cc8e8" fill-opacity="0.2" font-family="Liberation Sans, sans-serif">pmos</text>
<text x="1787.5" y="492.8" font-size="17" fill="#a9a8c2" fill-opacity="0.85" font-family="Liberation Sans, sans-serif">nmos</text>
<text x="1787.5" y="297" font-size="17" fill="#9cc8e8" fill-opacity="0.2" font-family="Liberation Sans, sans-serif">pmos</text>
<text x="1820.9" y="492.8" font-size="17" fill="#a9a8c2" fill-opacity="0.85" font-family="Liberation Sans, sans-serif">nmos</text>
<text x="1820.9" y="297" font-size="17" fill="#9cc8e8" fill-opacity="0.2" font-family="Liberation Sans, sans-serif">pmos</text>
</g>
<g transform="translate(621.4,0)">
<rect x="1645.0" y="168.2" width="244.8" height="205.2" fill="url(#pNW)" stroke="#2e8b63" stroke-width="1.2"/>
<rect x="1647.6" y="170.6" width="239.8" height="200.4" fill="none" stroke="#2e8b63" stroke-width="0.8"/>
<rect x="1668.9" y="230.5" width="208.9" height="137.8" fill="#8e1836" fill-opacity="0.95"/>
<rect x="1668.9" y="230.5" width="208.9" height="137.8" fill="url(#pHr)"/>
<rect x="1678.0" y="231.5" width="196.0" height="134.5" fill="none" stroke="#d04a6a" stroke-width="0.8"/>
<line x1="1678" y1="230.6" x2="1874" y2="230.6" stroke="#c08a60" stroke-width="1"/>
<rect x="1690.0" y="263.0" width="166.0" height="72.0" fill="none" stroke="#c9a030" stroke-width="0.8" stroke-opacity="0.8"/>
<rect x="1714.6" y="251.0" width="10.0" height="122.0" fill="url(#pPolyR)" stroke="#c87aa0" stroke-width="0.7"/>
<rect x="1750.0" y="251.0" width="9.6" height="122.0" fill="url(#pPolyR)" stroke="#c87aa0" stroke-width="0.7"/>
<rect x="1787.0" y="251.0" width="9.3" height="122.0" fill="url(#pPolyR)" stroke="#c87aa0" stroke-width="0.7"/>
<rect x="1822.0" y="251.0" width="9.0" height="122.0" fill="url(#pPolyR)" stroke="#c87aa0" stroke-width="0.7"/>
<rect x="1711.5" y="368.0" width="10.5" height="64.6" fill="url(#pPolyO)" stroke="#c84a28" stroke-width="1"/>
<rect x="1747.5" y="368.0" width="10.5" height="64.6" fill="url(#pPolyO)" stroke="#c84a28" stroke-width="1"/>
<rect x="1784.0" y="368.0" width="10.5" height="64.6" fill="url(#pPolyO)" stroke="#c84a28" stroke-width="1"/>
<rect x="1819.5" y="368.0" width="10.0" height="64.6" fill="url(#pPolyO)" stroke="#c84a28" stroke-width="1"/>
<rect x="1662.2" y="188.5" width="213.8" height="30.0" fill="url(#pM1b)" stroke="#35b4f0" stroke-width="1"/>
<rect x="1673.0" y="192.6" width="195.0" height="20.8" fill="url(#pGdot)" stroke="#12d83a" stroke-width="1.3" stroke-dasharray="3 2.2"/>
<rect x="1692.0" y="200.0" width="12.0" height="64.0" fill="url(#pM1)" stroke="#2fa9e8" stroke-width="1"/>
<rect x="1764.5" y="200.0" width="12.0" height="64.0" fill="url(#pM1)" stroke="#2fa9e8" stroke-width="1"/>
<rect x="1837.0" y="200.0" width="12.0" height="64.0" fill="url(#pM1)" stroke="#2fa9e8" stroke-width="1"/>
<rect x="1695.0" y="264.0" width="13.6" height="70.5" fill="url(#pM1b)" stroke="#35b4f0" stroke-width="1"/>
<rect x="1728.6" y="264.0" width="15.1" height="81.0" fill="url(#pM1b)" stroke="#35b4f0" stroke-width="1"/>
<rect x="1767.0" y="264.0" width="13.0" height="70.5" fill="url(#pM1b)" stroke="#35b4f0" stroke-width="1"/>
<rect x="1800.0" y="264.0" width="15.0" height="81.0" fill="url(#pM1b)" stroke="#35b4f0" stroke-width="1"/>
<rect x="1838.0" y="264.0" width="13.0" height="70.5" fill="url(#pM1b)" stroke="#35b4f0" stroke-width="1"/>
<rect x="1728.6" y="344.8" width="154.0" height="19.6" fill="url(#pM1b)" stroke="#35b4f0" stroke-width="1"/>
<rect x="1668.9" y="230.5" width="208.9" height="137.8" fill="#a01a3a" fill-opacity="0.33"/>
<rect x="1668.9" y="230.5" width="208.9" height="137.8" fill="url(#pHr)"/>
<rect x="1858.3" y="344.8" width="24.7" height="87.8" fill="url(#pM1)" stroke="#2fa9e8" stroke-width="1"/>
<rect x="1858.3" y="414.8" width="24.7" height="17.0" fill="url(#pM1)" stroke="#2fa9e8" stroke-width="1"/>
<rect x="1704.3" y="383.5" width="141.3" height="21.5" fill="url(#pM1)" stroke="#2fa9e8" stroke-width="1"/>
<rect x="1711.7" y="388.5" width="10.0" height="11.5" fill="none" stroke="#3fd0f0" stroke-width="1"/>
<rect x="1747.7" y="388.5" width="10.0" height="11.5" fill="none" stroke="#3fd0f0" stroke-width="1"/>
<rect x="1784.0" y="388.5" width="10.0" height="11.5" fill="none" stroke="#3fd0f0" stroke-width="1"/>
<rect x="1819.5" y="388.5" width="10.0" height="11.5" fill="none" stroke="#3fd0f0" stroke-width="1"/>
<rect x="1728.2" y="414.8" width="154.8" height="17.0" fill="url(#pM1)" stroke="#2fa9e8" stroke-width="1"/>
<rect x="1729.0" y="431.8" width="10.7" height="38.2" fill="url(#pM1)" stroke="#2fa9e8" stroke-width="1"/>
<rect x="1800.7" y="431.8" width="11.5" height="38.2" fill="url(#pM1)" stroke="#2fa9e8" stroke-width="1"/>
<rect x="1691.4" y="439.7" width="163.6" height="70.7" fill="url(#pG)" stroke="#0fd60f" stroke-width="1.2"/>
<rect x="1691.4" y="439.7" width="21.1" height="21.7" fill="none" stroke="#0fd60f" stroke-width="1"/>
<rect x="1726.5" y="439.7" width="20.5" height="21.7" fill="none" stroke="#0fd60f" stroke-width="1"/>
<rect x="1762.7" y="439.7" width="20.7" height="21.7" fill="none" stroke="#0fd60f" stroke-width="1"/>
<rect x="1798.0" y="439.7" width="21.5" height="21.7" fill="none" stroke="#0fd60f" stroke-width="1"/>
<rect x="1834.5" y="439.7" width="20.5" height="21.7" fill="none" stroke="#0fd60f" stroke-width="1"/>
<rect x="1714.5" y="426.8" width="10.7" height="95.6" fill="url(#pPolyN)" stroke="#b9a3b8" stroke-width="1"/>
<rect x="1750.0" y="426.8" width="10.3" height="95.6" fill="url(#pPolyN)" stroke="#b9a3b8" stroke-width="1"/>
<rect x="1786.0" y="426.8" width="10.2" height="95.6" fill="url(#pPolyN)" stroke="#b9a3b8" stroke-width="1"/>
<rect x="1822.0" y="426.8" width="10.3" height="95.6" fill="url(#pPolyN)" stroke="#b9a3b8" stroke-width="1"/>
<rect x="1695.2" y="439.7" width="12.7" height="70.3" fill="url(#pM1b)" stroke="#35b4f0" stroke-width="1"/>
<rect x="1731.0" y="439.7" width="12.8" height="70.3" fill="url(#pM1b)" stroke="#35b4f0" stroke-width="1"/>
<rect x="1767.2" y="439.7" width="12.8" height="70.3" fill="url(#pM1b)" stroke="#35b4f0" stroke-width="1"/>
<rect x="1802.3" y="439.7" width="12.4" height="70.3" fill="url(#pM1b)" stroke="#35b4f0" stroke-width="1"/>
<rect x="1838.9" y="439.7" width="12.3" height="70.3" fill="url(#pM1b)" stroke="#35b4f0" stroke-width="1"/>
<rect x="1648.6" y="523.7" width="267.4" height="70.7" fill="url(#pTap)" stroke="#0fd60f" stroke-width="1.2"/>
<rect x="1693.6" y="480.0" width="11.2" height="54.8" fill="url(#pM1)" stroke="#2fa9e8" stroke-width="1"/>
<rect x="1764.4" y="480.0" width="11.6" height="54.8" fill="url(#pM1)" stroke="#2fa9e8" stroke-width="1"/>
<rect x="1837.7" y="480.0" width="11.6" height="54.8" fill="url(#pM1)" stroke="#2fa9e8" stroke-width="1"/>
<rect x="1677.0" y="533.6" width="210.2" height="29.5" fill="url(#pM1b)" stroke="#35b4f0" stroke-width="1"/>
<rect x="1686.6" y="534.3" width="205.0" height="25.2" fill="none" stroke="#c8a58a" stroke-width="0.9"/>
<text x="1720.7" y="492.8" font-size="17" fill="#a9a8c2" fill-opacity="0.85" font-family="Liberation Sans, sans-serif">nmos</text>
<text x="1720.7" y="297" font-size="17" fill="#e8a0c0" fill-opacity="0.2" font-family="Liberation Sans, sans-serif">pmos</text>
<text x="1754.1" y="492.8" font-size="17" fill="#a9a8c2" fill-opacity="0.85" font-family="Liberation Sans, sans-serif">nmos</text>
<text x="1754.1" y="297" font-size="17" fill="#e8a0c0" fill-opacity="0.2" font-family="Liberation Sans, sans-serif">pmos</text>
<text x="1787.5" y="492.8" font-size="17" fill="#a9a8c2" fill-opacity="0.85" font-family="Liberation Sans, sans-serif">nmos</text>
<text x="1787.5" y="297" font-size="17" fill="#e8a0c0" fill-opacity="0.2" font-family="Liberation Sans, sans-serif">pmos</text>
<text x="1820.9" y="492.8" font-size="17" fill="#a9a8c2" fill-opacity="0.85" font-family="Liberation Sans, sans-serif">nmos</text>
<text x="1820.9" y="297" font-size="17" fill="#e8a0c0" fill-opacity="0.2" font-family="Liberation Sans, sans-serif">pmos</text>
</g>
</svg>
<span class="t r " style="left:2434.7px;top:652.9px;font-size:17.69px;color:#222;">Select Item</span>
<div class="b " style="left:2540.0px;top:663.0px;width:11.0px;height:11.0px;background:radial-gradient(circle,#bbb 0.7px,transparent 1px) 0 0/3.6px 3.6px;clip-path:polygon(100% 0,100% 100%,0 100%);"></div>
<div class="b " style="left:1629.5px;top:372.0px;width:1.0px;height:22.0px;background:repeating-linear-gradient(#bbb 0 1px,transparent 1px 3px);"></div>
<!-- win4 -->
<div class="b " style="left:0.0px;top:680.0px;width:1274.5px;height:716.0px;background:#fff;border-radius:10px 10px 0 0;box-shadow:0 0 0 0.5px #c8c8c8;"></div>
<div class="b " style="left:0.0px;top:680.0px;width:1274.5px;height:38.5px;background:linear-gradient(#f6f6f6,#f1f1f1);border-radius:10px 10px 0 0;"></div>
<svg class="b" style="left:15px;top:692.4px" width="17.2" height="16.3" viewBox="0 0 18 17"><use href="#appicon"/></svg>
<div class="b " style="left:45.0px;top:692.7px;width:16.0px;height:16.0px;border-radius:50%;background:#cfcfcf;"></div>
<span class="t r " style="left:474.3px;top:689.7px;font-size:17.30px;color:#b3b3b3;">Revolution EDA LVS Results Dialogue</span>
<div class="b " style="left:1181.0px;top:692.7px;width:16.0px;height:16.0px;border-radius:50%;background:#cfcfcf;"></div>
<div class="b " style="left:1210.5px;top:692.7px;width:16.0px;height:16.0px;border-radius:50%;background:#cfcfcf;"></div>
<div class="b " style="left:1239.5px;top:692.7px;width:16.0px;height:16.0px;border-radius:50%;background:#cfcfcf;"></div>
<div class="b " style="left:14.0px;top:764.0px;width:1245.0px;height:577.5px;background:#fff;border:1px solid #c2c2c2;border-top:1.5px solid #b9b9b9;border-left-color:#f4f4f4;"></div>
<div class="b " style="left:14.0px;top:734.2px;width:106.6px;height:30.5px;background:linear-gradient(#f4f4f4,#ececec);border:1px solid #c9c9c9;border-bottom:1px solid #c6c6c6;border-radius:3px 3px 0 0;"></div>
<span class="t r " style="left:28.0px;top:740.7px;font-size:17.76px;color:#222;">Summary</span>
<div class="b " style="left:119.6px;top:734.2px;width:67.1px;height:30.5px;background:linear-gradient(#f4f4f4,#ececec);border:1px solid #c9c9c9;border-bottom:1px solid #c6c6c6;border-radius:3px 3px 0 0;"></div>
<span class="t r " style="left:133.5px;top:740.5px;font-size:17.99px;color:#222;">Nets</span>
<div class="b " style="left:185.7px;top:734.2px;width:92.7px;height:30.5px;background:linear-gradient(#f4f4f4,#ececec);border:1px solid #c9c9c9;border-bottom:1px solid #c6c6c6;border-radius:3px 3px 0 0;"></div>
<span class="t r " style="left:199.0px;top:740.6px;font-size:17.85px;color:#222;">Devices</span>
<div class="b " style="left:277.4px;top:734.2px;width:126.2px;height:30.5px;background:linear-gradient(#f4f4f4,#ececec);border:1px solid #c9c9c9;border-bottom:1px solid #c6c6c6;border-radius:3px 3px 0 0;"></div>
<span class="t r " style="left:291.0px;top:740.6px;font-size:17.81px;color:#222;">Schem Nets</span>
<div class="b " style="left:402.6px;top:734.2px;width:151.9px;height:30.5px;background:linear-gradient(#f4f4f4,#ececec);border:1px solid #c9c9c9;border-bottom:1px solid #c6c6c6;border-radius:3px 3px 0 0;"></div>
<span class="t r " style="left:416.0px;top:740.7px;font-size:17.71px;color:#222;">Schem Devices</span>
<div class="b " style="left:553.5px;top:734.2px;width:69.0px;height:30.5px;background:linear-gradient(#f4f4f4,#ececec);border:1px solid #c9c9c9;border-bottom:1px solid #c6c6c6;border-radius:3px 3px 0 0;"></div>
<span class="t r " style="left:567.0px;top:740.7px;font-size:17.77px;color:#222;">Cells</span>
<div class="b " style="left:621.5px;top:732.0px;width:151.5px;height:33.2px;background:#fff;border:1px solid #c6c6c6;border-bottom:none;border-radius:3px 3px 0 0;"></div>
<span class="t r " style="left:634.5px;top:739.7px;font-size:18.07px;color:#1d1d1d;">Mismatches (2)</span>
<div class="b " style="left:26.2px;top:779.0px;width:1.0px;height:251.0px;background:#c9c9c9;"></div>
<div class="b " style="left:1245.0px;top:779.0px;width:1.0px;height:251.0px;background:#d4d4d4;"></div>
<div class="b " style="left:27.0px;top:779.6px;width:750.0px;height:26.0px;background:#fafafa;"></div>
<div class="b " style="left:27.0px;top:805.3px;width:750.0px;height:34.5px;background:#fff;border:1px solid #dcdcdc;"></div>
<div class="b " style="left:121.5px;top:781.0px;width:1.0px;height:58.0px;background:#dcdcdc;"></div>
<div class="b " style="left:245.8px;top:781.0px;width:1.0px;height:58.0px;background:#dcdcdc;"></div>
<div class="b " style="left:334.4px;top:781.0px;width:1.0px;height:58.0px;background:#dcdcdc;"></div>
<div class="b " style="left:419.5px;top:781.0px;width:1.0px;height:58.0px;background:#dcdcdc;"></div>
<div class="b " style="left:501.6px;top:781.0px;width:1.0px;height:58.0px;background:#dcdcdc;"></div>
<div class="b " style="left:611.5px;top:781.0px;width:1.0px;height:58.0px;background:#dcdcdc;"></div>
<div class="b " style="left:703.8px;top:781.0px;width:1.0px;height:58.0px;background:#dcdcdc;"></div>
<div class="b " style="left:501.6px;top:805.3px;width:110.0px;height:34.5px;background:#3455ec;"></div>
<span class="t " style="left:32.2px;top:783.1px;font-size:16.74px;letter-spacing:-0.202px;font-weight:bold;color:#1d1d1d;">Layout Cell</span>
<span class="t " style="left:125.9px;top:783.1px;font-size:16.74px;letter-spacing:-0.042px;font-weight:bold;color:#1d1d1d;">Schematic Cell</span>
<span class="t " style="left:249.5px;top:783.1px;font-size:16.74px;letter-spacing:-0.115px;font-weight:bold;color:#1d1d1d;">Equivalent</span>
<span class="t " style="left:338.0px;top:783.0px;font-size:16.94px;font-weight:bold;color:#1d1d1d;">Net Mism.</span>
<span class="t " style="left:423.3px;top:783.1px;font-size:16.74px;letter-spacing:-0.182px;font-weight:bold;color:#1d1d1d;">Pin Mism.</span>
<span class="t " style="left:504.7px;top:783.1px;font-size:16.74px;font-weight:bold;color:#1d1d1d;">Device Mism.</span>
<span class="t " style="left:616.0px;top:783.1px;font-size:16.74px;letter-spacing:-0.148px;font-weight:bold;color:#1d1d1d;">Total Items</span>
<span class="t " style="left:714.5px;top:783.1px;font-size:16.74px;letter-spacing:-0.084px;font-weight:bold;color:#1d1d1d;">Visited</span>
<span class="t r " style="left:32.9px;top:812.8px;font-size:17.99px;color:#222;">opamps</span>
<span class="t r " style="left:126.2px;top:813.4px;font-size:17.24px;color:#222;">OPAMPS</span>
<span class="t r " style="left:250.5px;top:812.6px;font-size:19.50px;color:#222;font-family:DejaVu Sans,sans-serif;-webkit-text-stroke:0;">✕</span>
<span class="t r " style="left:339.0px;top:812.8px;font-size:18.00px;color:#222;">0</span>
<span class="t r " style="left:424.0px;top:812.8px;font-size:18.00px;color:#222;">0</span>
<span class="t r " style="left:505.6px;top:812.8px;font-size:18.00px;color:#fff;">2</span>
<span class="t r " style="left:616.0px;top:812.8px;font-size:18.00px;color:#222;">2</span>
<div class="b chk" style="left:708.0px;top:814.6px;width:15.7px;height:15.7px;"><svg width="16" height="16" viewBox="0 0 16 16" style="position:absolute;left:-1px;top:-1px"><path d="M4 8 L6.8 11.6 L11.4 4" fill="none" stroke="#222" stroke-width="1.6"/></svg></div>
<span class="t r " style="left:731.0px;top:813.3px;font-size:17.33px;color:#222;">True</span>
<span class="t r " style="left:30.7px;top:1050.7px;font-size:17.52px;color:#e07b1f;">Device Mismatches: opamps</span>
<span class="t r " style="left:263.8px;top:1052.0px;font-size:15.50px;color:#e07b1f;font-family:DejaVu Sans,sans-serif;font-weight:bold;">↔</span>
<span class="t r " style="left:283.3px;top:1050.9px;font-size:17.29px;color:#e07b1f;">OPAMPS</span>
<div class="b " style="left:26.2px;top:1077.6px;width:1.0px;height:251.5px;background:#c9c9c9;"></div>
<div class="b " style="left:1245.0px;top:1077.0px;width:1.0px;height:252.0px;background:#d4d4d4;"></div>
<span class="t r " style="left:32.2px;top:1086.1px;font-size:17.51px;color:#222;">Cell Equivalence: ✕ Not Equivalent</span>
<svg class="b" style="left:32.5px;top:1132.5px" width="19" height="16" viewBox="0 0 19 16"><path d="M2 1.5 L17 14.5 M17 1.5 L2 14.5" stroke="#e8322c" stroke-width="3.6" stroke-linecap="butt"/></svg>
<span class="t r " style="left:55.4px;top:1132.1px;font-size:17.65px;color:#222;">Device Property Mismatches (1):</span>
<span class="t r " style="left:39.8px;top:1154.9px;font-size:17.65px;color:#222;">sg13_lv_pmos: layout W=4.0, L=0.13 x2 vs schematic W=6.0, L=0.13</span>
<span class="t r " style="left:39.8px;top:1201.2px;font-size:17.75px;color:#222;">Raw cross-reference fallout rows: 6 (suppressed from the summary count).</span>
<div class="b btn" style="left:1065.0px;top:1349.8px;width:92.0px;height:30.5px;border-color:#5b78e0;background:linear-gradient(#f3f5fd,#e9ecfa);"></div>
<svg class="b" style="left:1088px;top:1357.5px" width="15" height="14" viewBox="0 0 15 14"><path d="M1.5 7.5 L5.5 11.5 L13.5 2" fill="none" stroke="#555" stroke-width="1.5"/></svg>
<span class="t r " style="left:1106.5px;top:1358.2px;font-size:17.30px;color:#222;">OK</span>
<div class="b btn" style="left:1164.0px;top:1350.4px;width:94.5px;height:30.0px;"></div>
<svg class="b" style="left:1172.5px;top:1356.5px" width="16" height="16" viewBox="0 0 16 16"><circle cx="8" cy="8" r="6.4" fill="none" stroke="#444" stroke-width="1.3"/><path d="M3.6 3.6 L12.4 12.4" stroke="#444" stroke-width="1.3"/></svg>
<span class="t r " style="left:1191.0px;top:1357.7px;font-size:17.83px;color:#222;">Cancel</span>
<div class="b " style="left:0.0px;top:1392.5px;width:1273.0px;height:1.0px;background:#d9d9d9;"></div>
<!-- win5 -->
<div class="b " style="left:1274.5px;top:678.0px;width:1285.0px;height:720.0px;background:#2b4660;"></div>
<div class="b " style="left:1278.0px;top:681.0px;width:1277.0px;height:715.0px;background:#fff;border-radius:10px 10px 0 0;"></div>
<div class="b " style="left:1278.0px;top:681.0px;width:1277.0px;height:37.5px;background:linear-gradient(#f5f5f5,#f0f0f0);border-radius:10px 10px 0 0;"></div>
<svg class="b" style="left:1295px;top:692.4px" width="17.2" height="16.3" viewBox="0 0 18 17"><use href="#appicon"/></svg>
<div class="b " style="left:1325.0px;top:692.7px;width:16.0px;height:16.0px;border-radius:50%;background:#cfcfcf;"></div>
<span class="t r " style="left:1729.0px;top:689.1px;font-size:17.94px;color:#b0b0b0;">Schematic Editor - opamps - lvs_schematic</span>
<div class="b " style="left:2461.0px;top:692.8px;width:16.0px;height:16.0px;border-radius:50%;background:#cfcfcf;"></div>
<div class="b " style="left:2491.0px;top:692.8px;width:16.0px;height:16.0px;border-radius:50%;background:#cfcfcf;"></div>
<div class="b " style="left:2520.0px;top:692.8px;width:16.0px;height:16.0px;border-radius:50%;background:#cfcfcf;"></div>
<span class="t r " style="left:1293.3px;top:723.6px;font-size:18.00px;color:#1d1d1d;"><u>F</u>ile</span>
<span class="t r " style="left:1337.1px;top:723.6px;font-size:18.00px;color:#1d1d1d;"><u>V</u>iew</span>
<span class="t r " style="left:1392.9px;top:723.6px;font-size:18.00px;color:#1d1d1d;"><u>E</u>dit</span>
<span class="t r " style="left:1440.6px;top:723.6px;font-size:18.00px;color:#1d1d1d;">C<u>r</u>eate</span>
<span class="t r " style="left:1511.3px;top:723.6px;font-size:18.00px;color:#1d1d1d;"><u>O</u>ptions</span>
<span class="t r " style="left:1590.8px;top:723.6px;font-size:18.00px;color:#1d1d1d;"><u>C</u>heck</span>
<span class="t r " style="left:1658.3px;top:723.6px;font-size:18.00px;color:#1d1d1d;"><u>T</u>ools</span>
<span class="t r " style="left:1718.5px;top:723.6px;font-size:18.00px;color:#1d1d1d;"><u>U</u>tilities</span>
<span class="t r " style="left:1794.0px;top:723.6px;font-size:18.00px;color:#1d1d1d;"><u>S</u>imulation</span>
<span class="t r " style="left:1894.1px;top:723.6px;font-size:18.00px;color:#1d1d1d;"><u>H</u>elp</span>
<div class="b " style="left:1282.0px;top:745.0px;width:1269.0px;height:1.4px;background:#ececec;"></div>
<div class="b" style="left:1286.5px;top:764.5px;width:6px;height:19px;background:radial-gradient(circle,#a8a8a8 0.6px,transparent 0.9px) 0 0/3px 3.2px"></div>
<svg class="b" style="left:1310.1px;top:764.0px" width="19" height="19" viewBox="0 0 20 20"><use href="#i-new"/></svg>
<div class="b" style="left:1345.9px;top:759.2px;width:1px;height:30px;background:#dfdfdf"></div>
<svg class="b" style="left:1364.5px;top:764.0px" width="19" height="19" viewBox="0 0 20 20"><use href="#i-print"/></svg>
<svg class="b" style="left:1412.1px;top:764.0px" width="19" height="19" viewBox="0 0 20 20"><use href="#i-export"/></svg>
<div class="b" style="left:1447.9px;top:759.2px;width:1px;height:30px;background:#dfdfdf"></div>
<svg class="b" style="left:1466.5px;top:764.0px" width="19" height="19" viewBox="0 0 20 20"><use href="#i-undo"/></svg>
<svg class="b" style="left:1514.0px;top:764.0px" width="19" height="19" viewBox="0 0 20 20"><use href="#i-redo"/></svg>
<div class="b" style="left:1550.8px;top:759.2px;width:1px;height:30px;background:#dfdfdf"></div>
<svg class="b" style="left:1569.1px;top:764.0px" width="19" height="19" viewBox="0 0 20 20"><use href="#i-stretch"/></svg>
<svg class="b" style="left:1615.5px;top:764.0px" width="19" height="19" viewBox="0 0 20 20"><use href="#i-move"/></svg>
<svg class="b" style="left:1663.3px;top:764.0px" width="19" height="19" viewBox="0 0 20 20"><use href="#i-copy"/></svg>
<svg class="b" style="left:1710.5px;top:764.0px" width="19" height="19" viewBox="0 0 20 20"><use href="#i-goto"/></svg>
<svg class="b" style="left:1757.5px;top:764.0px" width="19" height="19" viewBox="0 0 20 20"><use href="#i-rotate"/></svg>
<svg class="b" style="left:1804.1px;top:764.0px" width="19" height="19" viewBox="0 0 20 20"><use href="#i-fliph"/></svg>
<svg class="b" style="left:1851.5px;top:764.0px" width="19" height="19" viewBox="0 0 20 20"><use href="#i-flipv"/></svg>
<div class="b" style="left:1888.8px;top:759.2px;width:1px;height:30px;background:#dfdfdf"></div>
<svg class="b" style="left:1907.2px;top:764.0px" width="19" height="19" viewBox="0 0 20 20"><use href="#i-fitrect"/></svg>
<svg class="b" style="left:1954.1px;top:764.0px" width="19" height="19" viewBox="0 0 20 20"><use href="#i-zoomfit"/></svg>
<svg class="b" style="left:2001.3px;top:764.0px" width="19" height="19" viewBox="0 0 20 20"><use href="#i-zoomsel"/></svg>
<div class="b" style="left:2037.9px;top:759.2px;width:1px;height:30px;background:#dfdfdf"></div>
<svg class="b" style="left:2055.9px;top:764.0px" width="19" height="19" viewBox="0 0 20 20"><use href="#i-props"/></svg>
<svg class="b" style="left:2103.8px;top:764.0px" width="19" height="19" viewBox="0 0 20 20"><use href="#i-props2"/></svg>
<div class="b" style="left:2146.5px;top:764.5px;width:6px;height:19px;background:radial-gradient(circle,#a8a8a8 0.6px,transparent 0.9px) 0 0/3px 3.2px"></div>
<svg class="b" style="left:2165.3px;top:764.0px" width="19" height="19" viewBox="0 0 20 20"><use href="#i-cubes"/></svg>
<svg class="b" style="left:2202.5px;top:764.0px" width="19" height="19" viewBox="0 0 20 20"><use href="#i-line"/></svg>
<svg class="b" style="left:2240.5px;top:764.0px" width="19" height="19" viewBox="0 0 20 20"><use href="#i-nodes"/></svg>
<svg class="b" style="left:2278.9px;top:764.0px" width="19" height="19" viewBox="0 0 20 20"><use href="#i-pin"/></svg>
<svg class="b" style="left:2317.3px;top:764.0px" width="19" height="19" viewBox="0 0 20 20"><use href="#i-wincubes"/></svg>
<div class="b" style="left:2348.5px;top:759.2px;width:1px;height:30px;background:#dfdfdf"></div>
<svg class="b" style="left:2362.7px;top:764.0px" width="19" height="19" viewBox="0 0 20 20"><use href="#i-check"/></svg>
<div class="b" style="left:2394.8px;top:759.2px;width:1px;height:30px;background:#dfdfdf"></div>
<svg class="b" style="left:2408.4px;top:764.0px" width="19" height="19" viewBox="0 0 20 20"><use href="#i-down"/></svg>
<div class="b" style="left:2440.9px;top:759.2px;width:1px;height:30px;background:#dfdfdf"></div>
<svg class="b" style="left:2454.5px;top:764.0px" width="19" height="19" viewBox="0 0 20 20"><use href="#i-target"/></svg>
<svg class="b" style="left:2492.9px;top:764.0px" width="19" height="19" viewBox="0 0 20 20"><use href="#i-pencilplus"/></svg>
<span class="t r " style="left:2537.5px;top:757.6px;font-size:20.00px;color:#444;-webkit-text-stroke:0;">»</span>
<div class="b " style="left:1282.0px;top:798.2px;width:1269.0px;height:1.8px;background:#dcdcdc;"></div>
<div class="b " style="left:1282.0px;top:802.8px;width:1269.3px;height:561.3px;background-color:#000;background-image:radial-gradient(circle,#484848 0.6px,transparent 1.05px);background-size:12.52px 12.52px;background-position:4.2px -2.1px;"></div>
<svg class="b" style="left:0;top:0" width="2555" height="1396" viewBox="0 0 2555 1396">
<rect x="1310.4" y="1057" width="101" height="50.2" fill="none" stroke="#0a8a0a" stroke-width="2.2"/>
<path d="M1361.0 1034V1057M1361.0 1107V1131" stroke="#0a8a0a" stroke-width="2"/>
<rect x="1357.8" y="1030.5" width="2.6" height="5.5" fill="#e01818"/>
<rect x="1357.8" y="1128.5" width="2.6" height="5.5" fill="#e01818"/>
<path d="M1361.0 1011.5V1034.5M1361.0 1130.5V1152.5" stroke="#00f0f4" stroke-width="3.6"/>
<text x="1362.2" y="1031.3" font-size="10.5" fill="#14e6ee" font-family="Liberation Sans, sans-serif">net0</text>
<text x="1359.5" y="1042.6" font-size="8.5" fill="#d81414" font-family="Liberation Sans, sans-serif">VDD</text>
<text x="1359.5" y="1141.8" font-size="8.5" fill="#d81414" font-family="Liberation Sans, sans-serif">VSS</text>
<text x="1362.2" y="1150.3" font-size="10.5" fill="#14e6ee" font-family="Liberation Sans, sans-serif">net1</text>
<text x="1336.0" y="1086" font-size="10.5" fill="#e3a42c" font-family="Liberation Sans, sans-serif">opamp</text>
<text x="1411.6" y="1061.4" font-size="9.5" fill="#e3a42c" font-family="Liberation Sans, sans-serif">I0</text>
<rect x="2415.0" y="1057" width="101" height="50.2" fill="none" stroke="#0a8a0a" stroke-width="2.2"/>
<path d="M2465.6 1034V1057M2465.6 1107V1131" stroke="#0a8a0a" stroke-width="2"/>
<rect x="2462.4" y="1030.5" width="2.6" height="5.5" fill="#e01818"/>
<rect x="2462.4" y="1128.5" width="2.6" height="5.5" fill="#e01818"/>
<path d="M2465.6 1011.5V1034.5M2465.6 1130.5V1152.5" stroke="#00f0f4" stroke-width="3.6"/>
<text x="2466.8" y="1031.3" font-size="10.5" fill="#14e6ee" font-family="Liberation Sans, sans-serif">net0</text>
<text x="2464.1" y="1042.6" font-size="8.5" fill="#d81414" font-family="Liberation Sans, sans-serif">VDD</text>
<text x="2464.1" y="1141.8" font-size="8.5" fill="#d81414" font-family="Liberation Sans, sans-serif">VSS</text>
<text x="2466.8" y="1150.3" font-size="10.5" fill="#14e6ee" font-family="Liberation Sans, sans-serif">net1</text>
<text x="2440.6" y="1086" font-size="10.5" fill="#e3a42c" font-family="Liberation Sans, sans-serif">opamp</text>
<text x="2516.2" y="1061.4" font-size="9.5" fill="#e3a42c" font-family="Liberation Sans, sans-serif">I2</text>
</svg>
<span class="t r " style="left:1287.0px;top:1371.1px;font-size:17.91px;color:#222;">Cursor Position: (1310, -900)</span>
<span class="t r " style="left:2434.6px;top:1372.1px;font-size:17.69px;color:#222;">Select Item</span>
<div class="b " style="left:2540.0px;top:1381.0px;width:11.0px;height:11.0px;background:radial-gradient(circle,#bbb 0.7px,transparent 1px) 0 0/3.6px 3.6px;clip-path:polygon(100% 0,100% 100%,0 100%);"></div>
<!-- win2 -->
<div class="b " style="left:723.2px;top:0.0px;width:904.3px;height:701.3px;background:#fff;border-radius:10px 10px 0 0;box-shadow:0 12px 38px 6px rgba(0,0,0,0.42),0 0 0 0.5px rgba(0,0,0,0.25);"></div>
<svg class="b" style="left:740.8px;top:9.8px" width="17.4" height="16.4" viewBox="0 0 18 17"><use href="#appicon"/></svg>
<div class="b " style="left:770.7px;top:9.2px;width:16.6px;height:16.6px;border-radius:50%;background:#6cc5b6;"></div>
<span class="t r " style="left:992.0px;top:6.6px;font-size:17.99px;color:#303030;">Schematic Editor - opamp - lvs_schematic</span>
<div class="b " style="left:1532.7px;top:9.2px;width:16.6px;height:16.6px;border-radius:50%;background:#f5be2f;"></div>
<div class="b " style="left:1562.0px;top:9.2px;width:16.6px;height:16.6px;border-radius:50%;background:#2ec940;"></div>
<div class="b " style="left:1591.7px;top:9.2px;width:16.6px;height:16.6px;border-radius:50%;background:#f65f57;"></div>
<span class="t r " style="left:739.0px;top:40.6px;font-size:18.00px;color:#1d1d1d;"><u>F</u>ile</span>
<span class="t r " style="left:782.8px;top:40.6px;font-size:18.00px;color:#1d1d1d;"><u>V</u>iew</span>
<span class="t r " style="left:838.6px;top:40.6px;font-size:18.00px;color:#1d1d1d;"><u>E</u>dit</span>
<span class="t r " style="left:886.3px;top:40.6px;font-size:18.00px;color:#1d1d1d;">C<u>r</u>eate</span>
<span class="t r " style="left:957.0px;top:40.6px;font-size:18.00px;color:#1d1d1d;"><u>O</u>ptions</span>
<span class="t r " style="left:1036.5px;top:40.6px;font-size:18.00px;color:#1d1d1d;"><u>C</u>heck</span>
<span class="t r " style="left:1104.0px;top:40.6px;font-size:18.00px;color:#1d1d1d;"><u>T</u>ools</span>
<span class="t r " style="left:1164.2px;top:40.6px;font-size:18.00px;color:#1d1d1d;"><u>U</u>tilities</span>
<span class="t r " style="left:1239.7px;top:40.6px;font-size:18.00px;color:#1d1d1d;"><u>S</u>imulation</span>
<span class="t r " style="left:1339.8px;top:40.6px;font-size:18.00px;color:#1d1d1d;"><u>H</u>elp</span>
<div class="b " style="left:727.2px;top:62.5px;width:896.3px;height:1.4px;background:#ececec;"></div>
<div class="b" style="left:732.5px;top:81.6px;width:6px;height:19px;background:radial-gradient(circle,#a8a8a8 0.6px,transparent 0.9px) 0 0/3px 3.2px"></div>
<svg class="b" style="left:756.3px;top:81.1px" width="19" height="19" viewBox="0 0 20 20"><use href="#i-new"/></svg>
<div class="b" style="left:791.9px;top:76.3px;width:1px;height:30px;background:#dfdfdf"></div>
<svg class="b" style="left:810.5px;top:81.1px" width="19" height="19" viewBox="0 0 20 20"><use href="#i-print"/></svg>
<svg class="b" style="left:857.5px;top:81.1px" width="19" height="19" viewBox="0 0 20 20"><use href="#i-export"/></svg>
<div class="b" style="left:893.9px;top:76.3px;width:1px;height:30px;background:#dfdfdf"></div>
<svg class="b" style="left:912.5px;top:81.1px" width="19" height="19" viewBox="0 0 20 20"><use href="#i-undo"/></svg>
<svg class="b" style="left:960.5px;top:81.1px" width="19" height="19" viewBox="0 0 20 20"><use href="#i-redo"/></svg>
<div class="b" style="left:996.9px;top:76.3px;width:1px;height:30px;background:#dfdfdf"></div>
<svg class="b" style="left:1015.2px;top:81.1px" width="19" height="19" viewBox="0 0 20 20"><use href="#i-stretch"/></svg>
<svg class="b" style="left:1061.5px;top:81.1px" width="19" height="19" viewBox="0 0 20 20"><use href="#i-move"/></svg>
<svg class="b" style="left:1109.3px;top:81.1px" width="19" height="19" viewBox="0 0 20 20"><use href="#i-copy"/></svg>
<svg class="b" style="left:1156.5px;top:81.1px" width="19" height="19" viewBox="0 0 20 20"><use href="#i-goto"/></svg>
<svg class="b" style="left:1203.5px;top:81.1px" width="19" height="19" viewBox="0 0 20 20"><use href="#i-rotate"/></svg>
<svg class="b" style="left:1250.1px;top:81.1px" width="19" height="19" viewBox="0 0 20 20"><use href="#i-fliph"/></svg>
<svg class="b" style="left:1298.3px;top:81.1px" width="19" height="19" viewBox="0 0 20 20"><use href="#i-flipv"/></svg>
<div class="b" style="left:1334.9px;top:76.3px;width:1px;height:30px;background:#dfdfdf"></div>
<svg class="b" style="left:1352.5px;top:81.1px" width="19" height="19" viewBox="0 0 20 20"><use href="#i-fitrect"/></svg>
<svg class="b" style="left:1399.5px;top:81.1px" width="19" height="19" viewBox="0 0 20 20"><use href="#i-zoomfit"/></svg>
<svg class="b" style="left:1447.0px;top:81.1px" width="19" height="19" viewBox="0 0 20 20"><use href="#i-zoomsel"/></svg>
<div class="b" style="left:1484.0px;top:76.3px;width:1px;height:30px;background:#dfdfdf"></div>
<div class="b" style="left:1557.5px;top:81.6px;width:6px;height:19px;background:radial-gradient(circle,#a8a8a8 0.6px,transparent 0.9px) 0 0/3px 3.2px"></div>
<svg class="b" style="left:1576.5px;top:81.1px" width="19" height="19" viewBox="0 0 20 20"><use href="#i-cubes"/></svg>
<span class="t r " style="left:1538.0px;top:79.1px;font-size:20.00px;color:#444;-webkit-text-stroke:0;">»</span>
<span class="t r " style="left:1610.0px;top:74.9px;font-size:20.00px;color:#444;-webkit-text-stroke:0;">»</span>
<div class="b " style="left:727.2px;top:115.2px;width:896.3px;height:1.8px;background:#dcdcdc;"></div>
<div class="b " style="left:728.0px;top:119.8px;width:895.0px;height:548.5px;background-color:#000;background-image:radial-gradient(circle,#1e1e1e 0.45px,transparent 0.85px);background-size:7.62px 7.58px;background-position:-3.6px -2.2px;"></div>
<svg class="b" style="left:0;top:0" width="2555" height="710" viewBox="0 0 2555 710">
<rect x="761.8" y="482.2" width="95.8" height="109.4" fill="#222258" fill-opacity="0.88" stroke="#6060f0" stroke-width="1.5" stroke-dasharray="7.5 3"/>
<rect x="767.2" y="487.6" width="84.2" height="98.6" fill="none" stroke="#1a1aff" stroke-width="1.6"/>
<path d="M803 511V558.3M811 499.7V569.6" stroke="#0a8a0a" stroke-width="2"/>
<path d="M767.7 534.8H803M811 507.7H830.4V486.4M811 561.6H830.4V581.6" fill="none" stroke="#0a8a0a" stroke-width="1.6"/>
<path d="M819.5 503.5L812 507.7L819.5 512Z" fill="none" stroke="#0a8a0a" stroke-width="1.2"/>
<path d="M822.5 530.8L830.5 534.8L822.5 539Z" fill="none" stroke="#0a8a0a" stroke-width="1.2"/>
<path d="M830.4 476.3V486.5M755.7 534.8H768M831 534.8H841.6M830.4 587V593" stroke="#00f0f4" stroke-width="2.1"/>
<rect x="829" y="486" width="2" height="4.5" fill="#e01818"/><rect x="829" y="579" width="2" height="4.5" fill="#e01818"/><rect x="768" y="533" width="3" height="2" fill="#e01818"/><rect x="828.6" y="533" width="3" height="6" fill="#e01818" fill-opacity="0.8"/>
<text x="831" y="487.5" font-size="5.8" fill="#14e6ee" font-family="Liberation Sans, sans-serif">NET0</text>
<text x="834" y="501.6" font-size="6.6" fill="#e3a42c" font-family="Liberation Sans, sans-serif">w=6u</text>
<text x="834" y="509.2" font-size="6.6" fill="#e3a42c" font-family="Liberation Sans, sans-serif">l=0.13u</text>
<text x="834" y="516.7" font-size="6.6" fill="#e3a42c" font-family="Liberation Sans, sans-serif">ng=1</text>
<text x="834" y="524.2" font-size="6.6" fill="#e3a42c" font-family="Liberation Sans, sans-serif">m=1</text>
<text x="762.5" y="539.8" font-size="5.8" fill="#14e6ee" font-family="Liberation Sans, sans-serif">I2:NET0</text>
<text x="835.4" y="539.8" font-size="5.8" fill="#14e6ee" font-family="Liberation Sans, sans-serif">NET0</text>
<text x="830.5" y="591.5" font-size="5.8" fill="#14e6ee" font-family="Liberation Sans, sans-serif">I2:NET1</text>
<path d="M1546.2 227.6V274.5M1554 215.6V286.5" stroke="#0a8a0a" stroke-width="2"/>
<path d="M1513 251H1546.2M1554 251H1574M1554 224.4H1573V208M1554 278.3H1573V297" fill="none" stroke="#0a8a0a" stroke-width="1.5"/>
<path d="M1565 274.5L1572.6 278.3L1565 282.3Z" fill="none" stroke="#0a8a0a" stroke-width="1.2"/>
<path d="M1573 192.5V208M1499.6 251H1513.4M1573 251H1584.8M1573 297V309.6" stroke="#00f0f4" stroke-width="2.2"/>
<rect x="1571.4" y="204" width="2" height="4.5" fill="#e01818"/><rect x="1571.4" y="296" width="2" height="4.5" fill="#e01818"/><rect x="1510.5" y="249.3" width="3.5" height="2" fill="#e01818"/><rect x="1571.4" y="251.5" width="2.5" height="5" fill="#e01818"/>
<text x="1574" y="204.3" font-size="5.8" fill="#14e6ee" font-family="Liberation Sans, sans-serif">I2:NET1</text>
<text x="1576.8" y="217.2" font-size="6.6" fill="#e3a42c" font-family="Liberation Sans, sans-serif">w=4u</text>
<text x="1576.8" y="224.9" font-size="6.6" fill="#e3a42c" font-family="Liberation Sans, sans-serif">l=0.13u</text>
<text x="1576.8" y="232.7" font-size="6.6" fill="#e3a42c" font-family="Liberation Sans, sans-serif">ng=1</text>
<text x="1576.8" y="240.4" font-size="6.6" fill="#e3a42c" font-family="Liberation Sans, sans-serif">m=1</text>
<text x="1539" y="248" font-size="5.9" fill="#e3a42c" font-family="Liberation Sans, sans-serif">sg13_lv_nmos</text>
<text x="1504.6" y="256.3" font-size="5.8" fill="#14e6ee" font-family="Liberation Sans, sans-serif">I2:NET0</text>
<text x="1577" y="256.3" font-size="5.8" fill="#14e6ee" font-family="Liberation Sans, sans-serif">NET1</text>
<text x="1575.5" y="307.2" font-size="5.8" fill="#14e6ee" font-family="Liberation Sans, sans-serif">NET1</text>
<path d="M1382.5 217.5h4.6v9.2h9.2v4.6h-9.2v9.2h-4.6v-9.2h-9.2v-4.6h9.2z" fill="#000" stroke="#f2f2f2" stroke-width="1.3"/>
</svg>
<span class="t r " style="left:733.8px;top:675.5px;font-size:17.97px;color:#222;">Cursor Position: (1520, -800)</span>
<span class="t r " style="left:1506.5px;top:675.7px;font-size:17.69px;color:#222;">Select Item</span>
<div class="b " style="left:1612.0px;top:686.0px;width:11.0px;height:11.0px;background:radial-gradient(circle,#bbb 0.7px,transparent 1px) 0 0/3.6px 3.6px;clip-path:polygon(100% 0,100% 100%,0 100%);"></div>
</body></html>
